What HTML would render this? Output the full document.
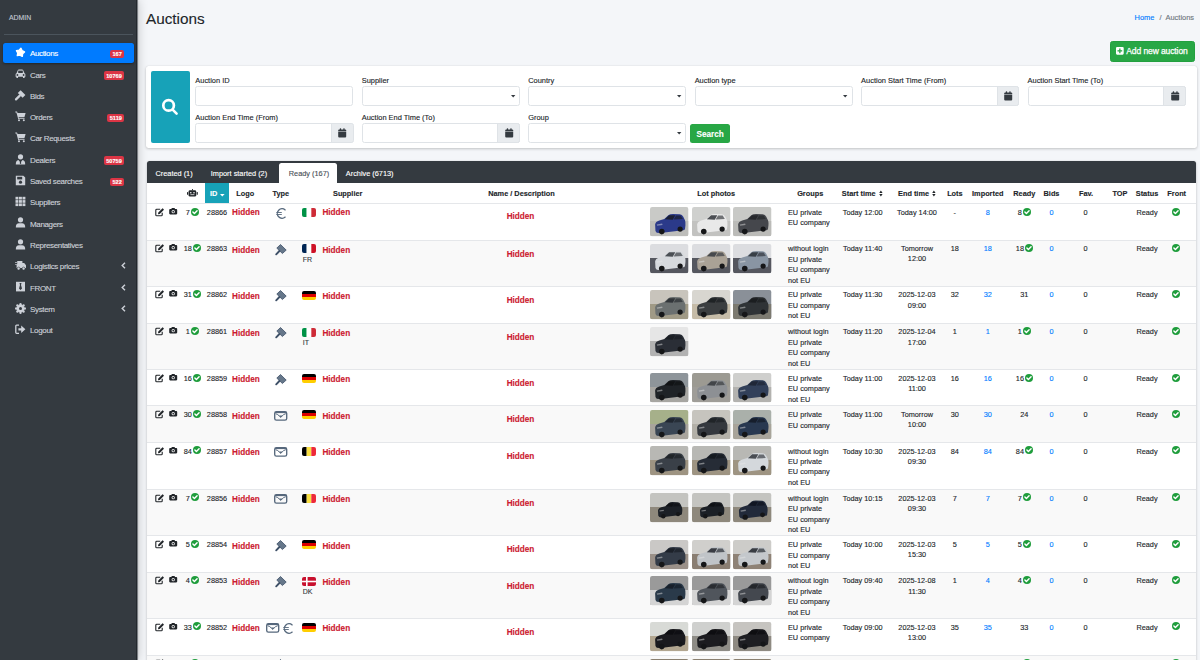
<!DOCTYPE html>
<html><head><meta charset="utf-8"><title>Auctions</title>
<style>
html,body{margin:0;padding:0;}
body{width:1200px;height:660px;overflow:hidden;position:relative;background:#f4f6f9;font-family:"Liberation Sans",sans-serif;}
.t{position:absolute;white-space:nowrap;font-family:"Liberation Sans",sans-serif;-webkit-text-stroke:0.12px currentColor;}
svg{overflow:visible}
</style></head><body>

<div style="position:absolute;left:0.00px;top:0.00px;width:137.00px;height:660.00px;background:#343a40;border-right:1px solid #23282d;box-sizing:border-box;box-shadow:1px 0 10px rgba(0,0,0,.2),1px 0 2px rgba(0,0,0,.18);z-index:5"></div>
<div style="position:absolute;left:137.00px;top:0.00px;width:1.00px;height:660.00px;background:#7a7e83;z-index:6"></div>
<div style="position:absolute;left:0;top:0;width:137px;height:660px;z-index:6">
<div class="t" style="left:9.00px;top:14.00px;font-size:6.9px;line-height:7px;color:#c2c7d0;">ADMIN</div>
<div style="position:absolute;left:3.50px;top:33.50px;width:129.50px;height:1.00px;background:#4b545c"></div>
<div style="position:absolute;left:3.00px;top:43.00px;width:130.50px;height:19.80px;background:#007bff;border-radius:2.5px;box-shadow:0 1px 3px rgba(0,0,0,.12),0 1px 2px rgba(0,0,0,.24)"></div>
<svg style="position:absolute;left:14.50px;top:46.90px" width="11" height="11" viewBox="0 0 11 11"><path d="M5.94 1.35 L7.13 3.75 L9.54 4.90 L7.62 6.76 L7.28 9.42 L4.91 8.17 L2.28 8.66 L2.73 6.02 L1.45 3.68 L4.10 3.29 Z" fill="#ffffff" stroke="#ffffff" stroke-width="1.4" stroke-linejoin="round"/></svg>
<div class="t" style="left:30.00px;top:49.00px;font-size:8.0px;line-height:9px;color:#ffffff;letter-spacing:-0.35px">Auctions</div>
<div style="position:absolute;left:110.00px;top:49.70px;width:14.20px;height:8.60px;background:#dc3545;border-radius:2px"></div>
<div class="t" style="left:-32.90px;width:300px;text-align:center;top:51.00px;font-size:5.6px;line-height:6px;color:#fff;font-weight:700;">167</div>
<svg style="position:absolute;left:14.50px;top:69.12px" width="11" height="11" viewBox="0 0 11 11"><path d="M1.5 4.2 L2.8 1.2 Q3.1 0.5 3.9 0.5 L7.1 0.5 Q7.9 0.5 8.2 1.2 L9.5 4.2 Q10.4 4.6 10.4 5.6 L10.4 7.8 L9.6 7.8 L9.6 9 L8 9 L8 7.8 L3 7.8 L3 9 L1.4 9 L1.4 7.8 L0.6 7.8 L0.6 5.6 Q0.6 4.6 1.5 4.2 Z" fill="#cdd1d8"/><rect x="3.2" y="1.6" width="4.6" height="2.4" fill="#343a40"/><circle cx="2.4" cy="6" r="0.9" fill="#343a40"/><circle cx="8.6" cy="6" r="0.9" fill="#343a40"/></svg>
<div class="t" style="left:30.00px;top:71.00px;font-size:8.0px;line-height:9px;color:#cdd1d8;letter-spacing:-0.35px">Cars</div>
<div style="position:absolute;left:103.80px;top:71.02px;width:20.40px;height:8.60px;background:#dc3545;border-radius:2px"></div>
<div class="t" style="left:-36.00px;width:300px;text-align:center;top:73.00px;font-size:5.6px;line-height:6px;color:#fff;font-weight:700;">10769</div>
<svg style="position:absolute;left:14.50px;top:89.54px" width="11" height="11" viewBox="0 0 11 11"><path d="M5.6 0.2 L10.4 5 L7.6 7.8 L2.8 3 Z" fill="#cdd1d8"/><path d="M4.8 5.6 L1 9.4" stroke="#cdd1d8" stroke-width="2.2" stroke-linecap="round"/></svg>
<div class="t" style="left:30.00px;top:92.00px;font-size:8.0px;line-height:9px;color:#cdd1d8;letter-spacing:-0.35px">Bids</div>
<svg style="position:absolute;left:14.50px;top:110.86px" width="11" height="11" viewBox="0 0 11 11"><path d="M0.3 0.6 L2 0.6 L2.6 2 L10.6 2 L9.4 6.2 L3.6 6.2 L3.9 7.2 L9.6 7.2 L9.6 8 L3.2 8 L1.4 1.5 L0.3 1.5 Z" fill="#cdd1d8"/><circle cx="4" cy="9.3" r="1" fill="#cdd1d8"/><circle cx="8.8" cy="9.3" r="1" fill="#cdd1d8"/></svg>
<div class="t" style="left:30.00px;top:113.00px;font-size:8.0px;line-height:9px;color:#cdd1d8;letter-spacing:-0.35px">Orders</div>
<div style="position:absolute;left:107.40px;top:113.66px;width:16.80px;height:8.60px;background:#dc3545;border-radius:2px"></div>
<div class="t" style="left:-34.20px;width:300px;text-align:center;top:115.00px;font-size:5.6px;line-height:6px;color:#fff;font-weight:700;">5119</div>
<svg style="position:absolute;left:14.50px;top:132.18px" width="11" height="11" viewBox="0 0 11 11"><path d="M0.3 0.6 L2 0.6 L2.6 2 L10.6 2 L9.4 6.2 L3.6 6.2 L3.9 7.2 L9.6 7.2 L9.6 8 L3.2 8 L1.4 1.5 L0.3 1.5 Z" fill="#cdd1d8"/><circle cx="4" cy="9.3" r="1" fill="#cdd1d8"/><circle cx="8.8" cy="9.3" r="1" fill="#cdd1d8"/></svg>
<div class="t" style="left:30.00px;top:134.00px;font-size:8.0px;line-height:9px;color:#cdd1d8;letter-spacing:-0.35px">Car Requests</div>
<svg style="position:absolute;left:14.50px;top:153.50px" width="11" height="11" viewBox="0 0 11 11"><circle cx="5.5" cy="2.8" r="2.6" fill="#cdd1d8"/><path d="M0.8 10.4 Q0.8 6.4 3.4 6 L5.5 8.6 L7.6 6 Q10.2 6.4 10.2 10.4 Z" fill="#cdd1d8"/><path d="M5.1 6.6 L5.9 6.6 L6.2 9.4 L5.5 10 L4.8 9.4 Z" fill="#343a40"/></svg>
<div class="t" style="left:30.00px;top:156.00px;font-size:8.0px;line-height:9px;color:#cdd1d8;letter-spacing:-0.35px">Dealers</div>
<div style="position:absolute;left:103.80px;top:156.30px;width:20.40px;height:8.60px;background:#dc3545;border-radius:2px"></div>
<div class="t" style="left:-36.00px;width:300px;text-align:center;top:158.00px;font-size:5.6px;line-height:6px;color:#fff;font-weight:700;">50759</div>
<svg style="position:absolute;left:14.50px;top:174.82px" width="11" height="11" viewBox="0 0 11 11"><path d="M0.8 0.8 L8.4 0.8 L10.2 2.6 L10.2 10.2 L0.8 10.2 Z" fill="#cdd1d8"/><rect x="2.2" y="1.8" width="5" height="2.6" fill="#343a40"/><circle cx="5.5" cy="7.2" r="1.6" fill="#343a40"/></svg>
<div class="t" style="left:30.00px;top:177.00px;font-size:8.0px;line-height:9px;color:#cdd1d8;letter-spacing:-0.35px">Saved searches</div>
<div style="position:absolute;left:110.00px;top:177.62px;width:14.20px;height:8.60px;background:#dc3545;border-radius:2px"></div>
<div class="t" style="left:-32.90px;width:300px;text-align:center;top:179.00px;font-size:5.6px;line-height:6px;color:#fff;font-weight:700;">522</div>
<svg style="position:absolute;left:14.50px;top:196.14px" width="11" height="11" viewBox="0 0 11 11"><rect x="0.5" y="0.8" width="2.9" height="2.7" fill="#cdd1d8"/><rect x="0.5" y="4.1" width="2.9" height="2.7" fill="#cdd1d8"/><rect x="0.5" y="7.3999999999999995" width="2.9" height="2.7" fill="#cdd1d8"/><rect x="4.0" y="0.8" width="2.9" height="2.7" fill="#cdd1d8"/><rect x="4.0" y="4.1" width="2.9" height="2.7" fill="#cdd1d8"/><rect x="4.0" y="7.3999999999999995" width="2.9" height="2.7" fill="#cdd1d8"/><rect x="7.5" y="0.8" width="2.9" height="2.7" fill="#cdd1d8"/><rect x="7.5" y="4.1" width="2.9" height="2.7" fill="#cdd1d8"/><rect x="7.5" y="7.3999999999999995" width="2.9" height="2.7" fill="#cdd1d8"/></svg>
<div class="t" style="left:30.00px;top:198.00px;font-size:8.0px;line-height:9px;color:#cdd1d8;letter-spacing:-0.35px">Suppliers</div>
<svg style="position:absolute;left:14.50px;top:217.46px" width="11" height="11" viewBox="0 0 11 11"><circle cx="5.5" cy="2.8" r="2.6" fill="#cdd1d8"/><path d="M0.8 10.4 Q0.8 6.2 4 6.2 L7 6.2 Q10.2 6.2 10.2 10.4 Z" fill="#cdd1d8"/></svg>
<div class="t" style="left:30.00px;top:220.00px;font-size:8.0px;line-height:9px;color:#cdd1d8;letter-spacing:-0.35px">Managers</div>
<svg style="position:absolute;left:14.50px;top:238.78px" width="11" height="11" viewBox="0 0 11 11"><circle cx="5.5" cy="2.8" r="2.6" fill="#cdd1d8"/><path d="M0.8 10.4 Q0.8 6.2 4 6.2 L7 6.2 Q10.2 6.2 10.2 10.4 Z" fill="#cdd1d8"/></svg>
<div class="t" style="left:30.00px;top:241.00px;font-size:8.0px;line-height:9px;color:#cdd1d8;letter-spacing:-0.35px">Representatives</div>
<svg style="position:absolute;left:14.50px;top:260.10px" width="11" height="11" viewBox="0 0 11 11"><path d="M2.2 1 L7.4 1 L7.4 3 L9.2 3 L11 5.2 L11 8 L1.6 8 L1.6 5 L0.2 5 L0.2 4.2 L2.2 4.2 Z" fill="#cdd1d8"/><circle cx="3.6" cy="8.6" r="1.5" fill="#cdd1d8" stroke="#343a40" stroke-width="0.6"/><circle cx="8.6" cy="8.6" r="1.5" fill="#cdd1d8" stroke="#343a40" stroke-width="0.6"/><rect x="0" y="2" width="2" height="0.7" fill="#cdd1d8"/></svg>
<div class="t" style="left:30.00px;top:262.00px;font-size:8.0px;line-height:9px;color:#cdd1d8;letter-spacing:-0.35px">Logistics prices</div>
<svg style="position:absolute;left:120.50px;top:262.40px" width="5" height="7" viewBox="0 0 5 7"><path d="M4 0.8 L1.2 3.5 L4 6.2" fill="none" stroke="#cdd1d8" stroke-width="1.4"/></svg>
<svg style="position:absolute;left:14.50px;top:281.42px" width="11" height="11" viewBox="0 0 11 11"><rect x="1" y="0.8" width="9" height="9.6" fill="#cdd1d8"/><path d="M4.5 2 L6.5 2 L6 4 L7 7.5 L5.5 9 L4 7.5 L5 4 Z" fill="#343a40"/></svg>
<div class="t" style="left:30.00px;top:284.00px;font-size:8.0px;line-height:9px;color:#cdd1d8;letter-spacing:-0.35px">FRONT</div>
<svg style="position:absolute;left:120.50px;top:283.72px" width="5" height="7" viewBox="0 0 5 7"><path d="M4 0.8 L1.2 3.5 L4 6.2" fill="none" stroke="#cdd1d8" stroke-width="1.4"/></svg>
<svg style="position:absolute;left:14.50px;top:302.74px" width="11" height="11" viewBox="0 0 11 11"><circle cx="5.5" cy="5.5" r="3.8" fill="#cdd1d8"/><circle cx="9.80" cy="5.50" r="1.2" fill="#cdd1d8"/><circle cx="8.54" cy="8.54" r="1.2" fill="#cdd1d8"/><circle cx="5.50" cy="9.80" r="1.2" fill="#cdd1d8"/><circle cx="2.46" cy="8.54" r="1.2" fill="#cdd1d8"/><circle cx="1.20" cy="5.50" r="1.2" fill="#cdd1d8"/><circle cx="2.46" cy="2.46" r="1.2" fill="#cdd1d8"/><circle cx="5.50" cy="1.20" r="1.2" fill="#cdd1d8"/><circle cx="8.54" cy="2.46" r="1.2" fill="#cdd1d8"/><circle cx="5.5" cy="5.5" r="1.5" fill="#343a40"/></svg>
<div class="t" style="left:30.00px;top:305.00px;font-size:8.0px;line-height:9px;color:#cdd1d8;letter-spacing:-0.35px">System</div>
<svg style="position:absolute;left:120.50px;top:305.04px" width="5" height="7" viewBox="0 0 5 7"><path d="M4 0.8 L1.2 3.5 L4 6.2" fill="none" stroke="#cdd1d8" stroke-width="1.4"/></svg>
<svg style="position:absolute;left:14.50px;top:324.06px" width="11" height="11" viewBox="0 0 11 11"><path d="M4 1.2 L1.6 1.2 Q0.8 1.2 0.8 2 L0.8 8.6 Q0.8 9.4 1.6 9.4 L4 9.4" fill="none" stroke="#cdd1d8" stroke-width="1.3"/><path d="M3.4 4.2 L6.2 4.2 L6.2 1.6 L10.4 5.3 L6.2 9 L6.2 6.4 L3.4 6.4 Z" fill="#cdd1d8"/></svg>
<div class="t" style="left:30.00px;top:326.00px;font-size:8.0px;line-height:9px;color:#cdd1d8;letter-spacing:-0.35px">Logout</div>
</div>
<div class="t" style="left:146.00px;top:10.00px;font-size:15.3px;line-height:17px;color:#212529;">Auctions</div>
<div class="t" style="left:1134.60px;top:13.00px;font-size:7.45px;line-height:9px;color:#6c757d;"><span style="color:#007bff">Home</span><span style="color:#6c757d;padding:0 4px 0 5px">/</span><span style="color:#6c757d">Auctions</span></div>
<div style="position:absolute;left:1109.60px;top:40.50px;width:85.90px;height:21.10px;background:#28a745;border:1px solid #23a03f;box-sizing:border-box;border-radius:2.5px"></div>
<svg style="position:absolute;left:1116.30px;top:46.60px" width="8" height="8" viewBox="0 0 8 8"><rect x="0" y="0" width="7.7" height="7.7" rx="1.1" fill="#fff"/><rect x="3.2" y="1.5" width="1.3" height="4.7" fill="#28a745"/><rect x="1.5" y="3.2" width="4.7" height="1.3" fill="#28a745"/></svg>
<div class="t" style="left:1126.30px;top:46.00px;font-size:8.5px;line-height:10px;color:#fff;letter-spacing:-0.1px;-webkit-text-stroke:0.25px #fff">Add new auction</div>
<div style="position:absolute;left:146.00px;top:65.50px;width:1050.50px;height:82.50px;background:#fff;border-radius:2.5px;box-shadow:0 0 1px rgba(0,0,0,.125),0 1px 3px rgba(0,0,0,.2)"></div>
<div style="position:absolute;left:151.00px;top:70.50px;width:39.00px;height:72.50px;background:#17a2b8;border-radius:2px"></div>
<svg style="position:absolute;left:161.00px;top:98.00px" width="18" height="18" viewBox="0 0 18 18"><circle cx="7.6" cy="7.4" r="5.3" fill="none" stroke="#fff" stroke-width="2.7"/><path d="M11.6 11.6 L15.6 15.6" stroke="#fff" stroke-width="2.6" stroke-linecap="round"/></svg>
<div class="t" style="left:195.30px;top:76.00px;font-size:7.45px;line-height:9px;color:#212529;">Auction ID</div>
<div style="position:absolute;left:195.30px;top:86.40px;width:158.20px;height:19.40px;background:#fff;border:1px solid #dfe3e7;border-radius:2.5px;box-sizing:border-box"></div>
<div class="t" style="left:361.75px;top:76.00px;font-size:7.45px;line-height:9px;color:#212529;">Supplier</div>
<div style="position:absolute;left:361.75px;top:86.40px;width:158.20px;height:19.40px;background:#fff;border:1px solid #dfe3e7;border-radius:2.5px;box-sizing:border-box"></div>
<svg style="position:absolute;left:510.55px;top:94.80px" width="5" height="3" viewBox="0 0 5 3"><path d="M0 0 L4.4 0 L2.2 2.6 Z" fill="#343a40"/></svg>
<div class="t" style="left:528.20px;top:76.00px;font-size:7.45px;line-height:9px;color:#212529;">Country</div>
<div style="position:absolute;left:528.20px;top:86.40px;width:158.20px;height:19.40px;background:#fff;border:1px solid #dfe3e7;border-radius:2.5px;box-sizing:border-box"></div>
<svg style="position:absolute;left:677.00px;top:94.80px" width="5" height="3" viewBox="0 0 5 3"><path d="M0 0 L4.4 0 L2.2 2.6 Z" fill="#343a40"/></svg>
<div class="t" style="left:694.65px;top:76.00px;font-size:7.45px;line-height:9px;color:#212529;">Auction type</div>
<div style="position:absolute;left:694.65px;top:86.40px;width:158.20px;height:19.40px;background:#fff;border:1px solid #dfe3e7;border-radius:2.5px;box-sizing:border-box"></div>
<svg style="position:absolute;left:843.45px;top:94.80px" width="5" height="3" viewBox="0 0 5 3"><path d="M0 0 L4.4 0 L2.2 2.6 Z" fill="#343a40"/></svg>
<div class="t" style="left:861.10px;top:76.00px;font-size:7.45px;line-height:9px;color:#212529;">Auction Start Time (From)</div>
<div style="position:absolute;left:861.10px;top:86.40px;width:158.20px;height:19.40px;background:#fff;border:1px solid #dfe3e7;border-radius:2.5px;box-sizing:border-box"></div>
<div style="position:absolute;left:996.80px;top:86.40px;width:22.50px;height:19.40px;background:#e9ecef;border:1px solid #dfe3e7;border-radius:0 2.5px 2.5px 0;box-sizing:border-box"></div>
<svg style="position:absolute;left:1004.10px;top:91.00px" width="9" height="10" viewBox="0 0 9 10"><path d="M0.2 2.6 Q0.2 1.6 1.2 1.6 L7.2 1.6 Q8.2 1.6 8.2 2.6 L8.2 3.4 L0.2 3.4 Z" fill="#343a40"/><rect x="1.8" y="0.2" width="1.3" height="2.4" rx="0.5" fill="#343a40"/><rect x="5.3" y="0.2" width="1.3" height="2.4" rx="0.5" fill="#343a40"/><path d="M0.2 4.1 L8.2 4.1 L8.2 8.4 Q8.2 9.4 7.2 9.4 L1.2 9.4 Q0.2 9.4 0.2 8.4 Z" fill="#343a40"/></svg>
<div class="t" style="left:1027.55px;top:76.00px;font-size:7.45px;line-height:9px;color:#212529;">Auction Start Time (To)</div>
<div style="position:absolute;left:1027.55px;top:86.40px;width:158.20px;height:19.40px;background:#fff;border:1px solid #dfe3e7;border-radius:2.5px;box-sizing:border-box"></div>
<div style="position:absolute;left:1163.25px;top:86.40px;width:22.50px;height:19.40px;background:#e9ecef;border:1px solid #dfe3e7;border-radius:0 2.5px 2.5px 0;box-sizing:border-box"></div>
<svg style="position:absolute;left:1170.55px;top:91.00px" width="9" height="10" viewBox="0 0 9 10"><path d="M0.2 2.6 Q0.2 1.6 1.2 1.6 L7.2 1.6 Q8.2 1.6 8.2 2.6 L8.2 3.4 L0.2 3.4 Z" fill="#343a40"/><rect x="1.8" y="0.2" width="1.3" height="2.4" rx="0.5" fill="#343a40"/><rect x="5.3" y="0.2" width="1.3" height="2.4" rx="0.5" fill="#343a40"/><path d="M0.2 4.1 L8.2 4.1 L8.2 8.4 Q8.2 9.4 7.2 9.4 L1.2 9.4 Q0.2 9.4 0.2 8.4 Z" fill="#343a40"/></svg>
<div class="t" style="left:195.30px;top:113.00px;font-size:7.45px;line-height:9px;color:#212529;">Auction End Time (From)</div>
<div style="position:absolute;left:195.30px;top:123.20px;width:158.20px;height:19.40px;background:#fff;border:1px solid #dfe3e7;border-radius:2.5px;box-sizing:border-box"></div>
<div style="position:absolute;left:331.00px;top:123.20px;width:22.50px;height:19.40px;background:#e9ecef;border:1px solid #dfe3e7;border-radius:0 2.5px 2.5px 0;box-sizing:border-box"></div>
<svg style="position:absolute;left:338.30px;top:127.80px" width="9" height="10" viewBox="0 0 9 10"><path d="M0.2 2.6 Q0.2 1.6 1.2 1.6 L7.2 1.6 Q8.2 1.6 8.2 2.6 L8.2 3.4 L0.2 3.4 Z" fill="#343a40"/><rect x="1.8" y="0.2" width="1.3" height="2.4" rx="0.5" fill="#343a40"/><rect x="5.3" y="0.2" width="1.3" height="2.4" rx="0.5" fill="#343a40"/><path d="M0.2 4.1 L8.2 4.1 L8.2 8.4 Q8.2 9.4 7.2 9.4 L1.2 9.4 Q0.2 9.4 0.2 8.4 Z" fill="#343a40"/></svg>
<div class="t" style="left:361.75px;top:113.00px;font-size:7.45px;line-height:9px;color:#212529;">Auction End Time (To)</div>
<div style="position:absolute;left:361.75px;top:123.20px;width:158.20px;height:19.40px;background:#fff;border:1px solid #dfe3e7;border-radius:2.5px;box-sizing:border-box"></div>
<div style="position:absolute;left:497.45px;top:123.20px;width:22.50px;height:19.40px;background:#e9ecef;border:1px solid #dfe3e7;border-radius:0 2.5px 2.5px 0;box-sizing:border-box"></div>
<svg style="position:absolute;left:504.75px;top:127.80px" width="9" height="10" viewBox="0 0 9 10"><path d="M0.2 2.6 Q0.2 1.6 1.2 1.6 L7.2 1.6 Q8.2 1.6 8.2 2.6 L8.2 3.4 L0.2 3.4 Z" fill="#343a40"/><rect x="1.8" y="0.2" width="1.3" height="2.4" rx="0.5" fill="#343a40"/><rect x="5.3" y="0.2" width="1.3" height="2.4" rx="0.5" fill="#343a40"/><path d="M0.2 4.1 L8.2 4.1 L8.2 8.4 Q8.2 9.4 7.2 9.4 L1.2 9.4 Q0.2 9.4 0.2 8.4 Z" fill="#343a40"/></svg>
<div class="t" style="left:528.20px;top:113.00px;font-size:7.45px;line-height:9px;color:#212529;">Group</div>
<div style="position:absolute;left:528.20px;top:123.20px;width:158.20px;height:19.40px;background:#fff;border:1px solid #dfe3e7;border-radius:2.5px;box-sizing:border-box"></div>
<svg style="position:absolute;left:677.00px;top:131.60px" width="5" height="3" viewBox="0 0 5 3"><path d="M0 0 L4.4 0 L2.2 2.6 Z" fill="#343a40"/></svg>
<div style="position:absolute;left:690.30px;top:123.50px;width:40.00px;height:19.00px;background:#28a745;border-radius:2.5px"></div>
<div class="t" style="left:560.20px;width:300px;text-align:center;top:130.00px;font-size:8.2px;line-height:9px;color:#fff;font-weight:700;">Search</div>
<div style="position:absolute;left:146.50px;top:161.00px;width:1049.00px;height:520.00px;background:#fff;border-radius:2.5px;box-shadow:0 0 1px rgba(0,0,0,.125),0 1px 3px rgba(0,0,0,.2);overflow:hidden"></div>
<div style="position:absolute;left:146.50px;top:161.00px;width:1049.00px;height:21.50px;background:#343a40;border-radius:2.5px 2.5px 0 0"></div>
<div style="position:absolute;left:279.30px;top:163.30px;width:57.70px;height:19.50px;background:#fff;border-radius:2.5px 2.5px 0 0"></div>
<div class="t" style="left:155.50px;top:169.00px;font-size:7.35px;line-height:9px;color:#fff;">Created (1)</div>
<div class="t" style="left:210.80px;top:169.00px;font-size:7.35px;line-height:9px;color:#fff;">Import started (2)</div>
<div class="t" style="left:288.80px;top:169.00px;font-size:7.35px;line-height:9px;color:#495057;">Ready (167)</div>
<div class="t" style="left:345.80px;top:169.00px;font-size:7.35px;line-height:9px;color:#fff;">Archive (6713)</div>
<div style="position:absolute;left:146.50px;top:203.00px;width:1049.00px;height:0.80px;background:#dee2e6"></div>
<div style="position:absolute;left:205.00px;top:183.00px;width:24.20px;height:20.20px;background:#17a2b8"></div>
<svg style="position:absolute;left:186.70px;top:189.20px" width="11" height="8" viewBox="0 0 11 8"><rect x="1.6" y="1.2" width="7.6" height="6.4" rx="1.4" fill="#212529"/><rect x="0" y="3" width="1.2" height="2.8" rx="0.5" fill="#212529"/><rect x="9.6" y="3" width="1.2" height="2.8" rx="0.5" fill="#212529"/><rect x="5" y="0" width="0.9" height="1.4" fill="#212529"/><rect x="3.2" y="3" width="1.2" height="1.4" fill="#fff"/><rect x="6.4" y="3" width="1.2" height="1.4" fill="#fff"/><rect x="3.4" y="5.4" width="4" height="0.7" fill="#fff"/></svg>
<div class="t" style="left:210.00px;top:189.00px;font-size:7.35px;line-height:9px;color:#fff;font-weight:700;">ID</div>
<svg style="position:absolute;left:219.60px;top:193.60px" width="5" height="3" viewBox="0 0 5 3"><path d="M0 0 L4.6 0 L2.3 2.6 Z" fill="#fff"/></svg>
<div class="t" style="left:95.20px;width:300px;text-align:center;top:189.00px;font-size:7.35px;line-height:9px;color:#212529;font-weight:700;">Logo</div>
<div class="t" style="left:130.90px;width:300px;text-align:center;top:189.00px;font-size:7.35px;line-height:9px;color:#212529;font-weight:700;">Type</div>
<div class="t" style="left:197.70px;width:300px;text-align:center;top:189.00px;font-size:7.35px;line-height:9px;color:#212529;font-weight:700;">Supplier</div>
<div class="t" style="left:371.50px;width:300px;text-align:center;top:189.00px;font-size:7.35px;line-height:9px;color:#212529;font-weight:700;">Name / Description</div>
<div class="t" style="left:566.20px;width:300px;text-align:center;top:189.00px;font-size:7.35px;line-height:9px;color:#212529;font-weight:700;">Lot photos</div>
<div class="t" style="left:660.20px;width:300px;text-align:center;top:189.00px;font-size:7.35px;line-height:9px;color:#212529;font-weight:700;">Groups</div>
<div class="t" style="left:837.80px;width:300px;text-align:center;top:189.00px;font-size:7.35px;line-height:9px;color:#212529;font-weight:700;">Imported</div>
<div class="t" style="left:804.90px;width:300px;text-align:center;top:189.00px;font-size:7.35px;line-height:9px;color:#212529;font-weight:700;">Lots</div>
<div class="t" style="left:874.30px;width:300px;text-align:center;top:189.00px;font-size:7.35px;line-height:9px;color:#212529;font-weight:700;">Ready</div>
<div class="t" style="left:901.50px;width:300px;text-align:center;top:189.00px;font-size:7.35px;line-height:9px;color:#212529;font-weight:700;">Bids</div>
<div class="t" style="left:936.00px;width:300px;text-align:center;top:189.00px;font-size:7.35px;line-height:9px;color:#212529;font-weight:700;">Fav.</div>
<div class="t" style="left:970.00px;width:300px;text-align:center;top:189.00px;font-size:7.35px;line-height:9px;color:#212529;font-weight:700;">TOP</div>
<div class="t" style="left:997.00px;width:300px;text-align:center;top:189.00px;font-size:7.35px;line-height:9px;color:#212529;font-weight:700;">Status</div>
<div class="t" style="left:1026.70px;width:300px;text-align:center;top:189.00px;font-size:7.35px;line-height:9px;color:#212529;font-weight:700;">Front</div>
<div class="t" style="left:841.80px;top:189.00px;font-size:7.35px;line-height:9px;color:#212529;font-weight:700;">Start time</div>
<svg style="position:absolute;left:879.00px;top:189.50px" width="4" height="7" viewBox="0 0 4 7"><path d="M0.2 2.9 L3.6 2.9 L1.9 0.4 Z M0.2 3.9 L3.6 3.9 L1.9 6.4 Z" fill="#212529"/></svg>
<div class="t" style="left:898.00px;top:189.00px;font-size:7.35px;line-height:9px;color:#212529;font-weight:700;">End time</div>
<svg style="position:absolute;left:931.50px;top:189.50px" width="4" height="7" viewBox="0 0 4 7"><path d="M0.2 2.9 L3.6 2.9 L1.9 0.4 Z M0.2 3.9 L3.6 3.9 L1.9 6.4 Z" fill="#212529"/></svg>
<div style="position:absolute;left:146.50px;top:203.75px;width:1049.00px;height:36.75px;background:#fff"></div>
<div style="position:absolute;left:146.50px;top:203.00px;width:1049.00px;height:1.30px;background:#e5e7ea"></div>
<svg style="position:absolute;left:154.80px;top:207.95px" width="9.5" height="8.5" viewBox="0 0 9.5 8.5"><path d="M5.2 1.3 L1.7 1.3 Q0.8 1.3 0.8 2.2 L0.8 6.9 Q0.8 7.7 1.7 7.7 L6.3 7.7 Q7.2 7.7 7.2 6.9 L7.2 4.8" fill="none" stroke="#212529" stroke-width="1.1"/><path d="M3.3 4.5 L7.3 0.5 Q7.6 0.2 7.9 0.5 L8.7 1.3 Q9 1.6 8.7 1.9 L4.7 5.9 L3 6.2 Z" fill="#212529"/></svg>
<svg style="position:absolute;left:168.60px;top:208.05px" width="8.6" height="7" viewBox="0 0 8.6 7"><path d="M0.2 2 Q0.2 1.1 1.1 1.1 L2.3 1.1 L2.9 0.1 L5.5 0.1 L6.1 1.1 L7.3 1.1 Q8.2 1.1 8.2 2 L8.2 5.6 Q8.2 6.4 7.3 6.4 L1.1 6.4 Q0.2 6.4 0.2 5.6 Z" fill="#212529"/><circle cx="4.2" cy="3.7" r="1.6" fill="#fff"/><circle cx="4.2" cy="3.7" r="0.85" fill="#212529"/></svg>
<div class="t" style="left:185.67px;top:208.00px;font-size:7.3px;line-height:9px;color:#212529;">7</div>
<svg style="position:absolute;left:190.53px;top:207.85px" width="8" height="8" viewBox="0 0 8 8"><circle cx="4" cy="4" r="4" fill="#1f9d3c"/><path d="M1.92 4.08 L3.40 5.52 L6.08 2.72" fill="none" stroke="#fff" stroke-width="1.44" stroke-linecap="round" stroke-linejoin="round"/></svg>
<div class="t" style="left:67.00px;width:300px;text-align:center;top:208.00px;font-size:7.3px;line-height:9px;color:#212529;">28866</div>
<div class="t" style="left:95.90px;width:300px;text-align:center;top:208.00px;font-size:8.2px;line-height:9px;color:#cc1a30;font-weight:700;">Hidden</div>
<svg style="position:absolute;left:276.00px;top:208.15px" width="10.5" height="11" viewBox="0 0 10.5 11"><path d="M9.2 1.9 A4.75 4.75 0 1 0 9.2 9.1" fill="none" stroke="#56687c" stroke-width="1.3" stroke-linecap="round"/><path d="M0.3 4.5 L5.8 4.5 M0.3 6.5 L5.8 6.5" stroke="#56687c" stroke-width="0.9"/></svg>
<svg style="position:absolute;left:302.40px;top:208.25px" width="14" height="8.9" viewBox="0 0 14 8.9"><defs><clipPath id="f30242082"><rect x="0" y="0" width="14" height="8.9" rx="2"/></clipPath></defs><g clip-path="url(#f30242082)"><rect x="0" y="0" width="4.67" height="9" fill="#009246"/><rect x="4.67" y="0" width="4.67" height="9" fill="#fff"/><rect x="9.33" y="0" width="4.67" height="9" fill="#ce2b37"/></g></svg>
<div class="t" style="left:322.40px;top:208.00px;font-size:8.2px;line-height:9px;color:#cc1a30;font-weight:700;">Hidden</div>
<div class="t" style="left:370.50px;width:300px;text-align:center;top:212.00px;font-size:8.2px;line-height:9px;color:#cc1a30;font-weight:700;">Hidden</div>
<svg style="position:absolute;left:650.30px;top:207.05px;border-radius:2px" width="38.5" height="29.3" viewBox="0 0 38.5 29.3"><defs><clipPath id="c65032070"><rect x="0" y="0" width="38.5" height="29.3" rx="2.2"/></clipPath></defs><g clip-path="url(#c65032070)"><rect x="0" y="0" width="38.5" height="29.3" fill="#c9cac7"/><rect x="0" y="14" width="38.5" height="15.3" fill="#bdbdba"/><g transform="translate(2.23 1.76) scale(0.9)"><path d="M3.2 17.6 Q3.6 14.2 7.8 13 L13.4 11.4 L18.2 7 Q19.8 5.8 23 5.8 L30.6 6 Q33.4 6.2 34.5 8.8 L36.4 12.8 Q37.2 14.6 36.9 18.4 L36.4 22.4 Q36 23.8 34.2 23.8 L9 27 Q4.4 27.4 3.6 24.6 Z" fill="#2b3a8a"/><path d="M14 11.6 L18.8 7.3 L25.6 7.3 L22.8 12.2 Z" fill="#1a1d2a" opacity="0.9"/><path d="M23.8 12 L26.5 7.4 L31.6 7.6 L34 11.4 Z" fill="#1a1d2a" opacity="0.7"/><path d="M5 17.4 L11 16.4 L11.5 18 L5.5 19 Z" fill="#e8e8e8" opacity="0.45"/><circle cx="10.6" cy="25.4" r="3.1" fill="#151618"/><circle cx="31" cy="22.6" r="2.9" fill="#151618"/></g></g></svg>
<svg style="position:absolute;left:691.50px;top:207.05px;border-radius:2px" width="38.5" height="29.3" viewBox="0 0 38.5 29.3"><defs><clipPath id="c69152070"><rect x="0" y="0" width="38.5" height="29.3" rx="2.2"/></clipPath></defs><g clip-path="url(#c69152070)"><rect x="0" y="0" width="38.5" height="29.3" fill="#cfd0ce"/><rect x="0" y="14" width="38.5" height="15.3" fill="#c2c2c0"/><g transform="translate(2.23 1.76) scale(0.9)"><path d="M3.2 17.6 Q3.6 14.2 7.8 13 L13.4 11.4 L18.2 7 Q19.8 5.8 23 5.8 L30.6 6 Q33.4 6.2 34.5 8.8 L36.4 12.8 Q37.2 14.6 36.9 18.4 L36.4 22.4 Q36 23.8 34.2 23.8 L9 27 Q4.4 27.4 3.6 24.6 Z" fill="#e9e9e9"/><path d="M14 11.6 L18.8 7.3 L25.6 7.3 L22.8 12.2 Z" fill="#3a3d42" opacity="0.9"/><path d="M23.8 12 L26.5 7.4 L31.6 7.6 L34 11.4 Z" fill="#3a3d42" opacity="0.7"/><path d="M5 17.4 L11 16.4 L11.5 18 L5.5 19 Z" fill="#e8e8e8" opacity="0.45"/><circle cx="10.6" cy="25.4" r="3.1" fill="#151618"/><circle cx="31" cy="22.6" r="2.9" fill="#151618"/></g></g></svg>
<svg style="position:absolute;left:732.70px;top:207.05px;border-radius:2px" width="38.5" height="29.3" viewBox="0 0 38.5 29.3"><defs><clipPath id="c73262070"><rect x="0" y="0" width="38.5" height="29.3" rx="2.2"/></clipPath></defs><g clip-path="url(#c73262070)"><rect x="0" y="0" width="38.5" height="29.3" fill="#c8c9c6"/><rect x="0" y="14" width="38.5" height="15.3" fill="#bbbbb8"/><g transform="translate(2.23 1.76) scale(0.9)"><path d="M3.2 17.6 Q3.6 14.2 7.8 13 L13.4 11.4 L18.2 7 Q19.8 5.8 23 5.8 L30.6 6 Q33.4 6.2 34.5 8.8 L36.4 12.8 Q37.2 14.6 36.9 18.4 L36.4 22.4 Q36 23.8 34.2 23.8 L9 27 Q4.4 27.4 3.6 24.6 Z" fill="#45474c"/><path d="M14 11.6 L18.8 7.3 L25.6 7.3 L22.8 12.2 Z" fill="#23262a" opacity="0.9"/><path d="M23.8 12 L26.5 7.4 L31.6 7.6 L34 11.4 Z" fill="#23262a" opacity="0.7"/><path d="M5 17.4 L11 16.4 L11.5 18 L5.5 19 Z" fill="#e8e8e8" opacity="0.45"/><circle cx="10.6" cy="25.4" r="3.1" fill="#151618"/><circle cx="31" cy="22.6" r="2.9" fill="#151618"/></g></g></svg>
<div class="t" style="left:788.00px;top:208.00px;font-size:7.3px;line-height:9px;color:#212529;">EU private</div>
<div class="t" style="left:788.00px;top:218.00px;font-size:7.3px;line-height:9px;color:#212529;">EU company</div>
<div class="t" style="left:712.70px;width:300px;text-align:center;top:208.00px;font-size:7.3px;line-height:9px;color:#212529;">Today 12:00</div>
<div class="t" style="left:767.00px;width:300px;text-align:center;top:208.00px;font-size:7.3px;line-height:9px;color:#212529;">Today 14:00</div>
<div class="t" style="left:804.80px;width:300px;text-align:center;top:208.00px;font-size:7.3px;line-height:9px;color:#212529;">-</div>
<div class="t" style="left:837.80px;width:300px;text-align:center;top:208.00px;font-size:7.3px;line-height:9px;color:#007bff;">8</div>
<div class="t" style="left:1017.87px;top:208.00px;font-size:7.3px;line-height:9px;color:#212529;">8</div>
<svg style="position:absolute;left:1022.73px;top:207.85px" width="8" height="8" viewBox="0 0 8 8"><circle cx="4" cy="4" r="4" fill="#1f9d3c"/><path d="M1.92 4.08 L3.40 5.52 L6.08 2.72" fill="none" stroke="#fff" stroke-width="1.44" stroke-linecap="round" stroke-linejoin="round"/></svg>
<div class="t" style="left:901.60px;width:300px;text-align:center;top:208.00px;font-size:7.3px;line-height:9px;color:#007bff;">0</div>
<div class="t" style="left:935.60px;width:300px;text-align:center;top:208.00px;font-size:7.3px;line-height:9px;color:#212529;">0</div>
<div class="t" style="left:997.00px;width:300px;text-align:center;top:208.00px;font-size:7.3px;line-height:9px;color:#212529;">Ready</div>
<svg style="position:absolute;left:1171.60px;top:207.85px" width="8" height="8" viewBox="0 0 8 8"><circle cx="4" cy="4" r="4" fill="#1f9d3c"/><path d="M1.92 4.08 L3.40 5.52 L6.08 2.72" fill="none" stroke="#fff" stroke-width="1.44" stroke-linecap="round" stroke-linejoin="round"/></svg>
<div style="position:absolute;left:146.50px;top:240.50px;width:1049.00px;height:46.25px;background:#f9f9f9"></div>
<div style="position:absolute;left:146.50px;top:239.50px;width:1049.00px;height:1.00px;background:#e5e7ea"></div>
<svg style="position:absolute;left:154.80px;top:244.10px" width="9.5" height="8.5" viewBox="0 0 9.5 8.5"><path d="M5.2 1.3 L1.7 1.3 Q0.8 1.3 0.8 2.2 L0.8 6.9 Q0.8 7.7 1.7 7.7 L6.3 7.7 Q7.2 7.7 7.2 6.9 L7.2 4.8" fill="none" stroke="#212529" stroke-width="1.1"/><path d="M3.3 4.5 L7.3 0.5 Q7.6 0.2 7.9 0.5 L8.7 1.3 Q9 1.6 8.7 1.9 L4.7 5.9 L3 6.2 Z" fill="#212529"/></svg>
<svg style="position:absolute;left:168.60px;top:244.20px" width="8.6" height="7" viewBox="0 0 8.6 7"><path d="M0.2 2 Q0.2 1.1 1.1 1.1 L2.3 1.1 L2.9 0.1 L5.5 0.1 L6.1 1.1 L7.3 1.1 Q8.2 1.1 8.2 2 L8.2 5.6 Q8.2 6.4 7.3 6.4 L1.1 6.4 Q0.2 6.4 0.2 5.6 Z" fill="#212529"/><circle cx="4.2" cy="3.7" r="1.6" fill="#fff"/><circle cx="4.2" cy="3.7" r="0.85" fill="#212529"/></svg>
<div class="t" style="left:183.64px;top:244.00px;font-size:7.3px;line-height:9px;color:#212529;">18</div>
<svg style="position:absolute;left:192.56px;top:244.00px" width="8" height="8" viewBox="0 0 8 8"><circle cx="4" cy="4" r="4" fill="#1f9d3c"/><path d="M1.92 4.08 L3.40 5.52 L6.08 2.72" fill="none" stroke="#fff" stroke-width="1.44" stroke-linecap="round" stroke-linejoin="round"/></svg>
<div class="t" style="left:67.00px;width:300px;text-align:center;top:244.00px;font-size:7.3px;line-height:9px;color:#212529;">28863</div>
<div class="t" style="left:95.90px;width:300px;text-align:center;top:246.00px;font-size:8.2px;line-height:9px;color:#cc1a30;font-weight:700;">Hidden</div>
<svg style="position:absolute;left:275.00px;top:244.00px" width="12" height="11.5" viewBox="0 0 12 11.5"><path d="M5.5 0.5 L11.2 6.1 L7.4 9.5 L1.8 4.1 Z" fill="#66778a" stroke="#3f5168" stroke-width="0.8" stroke-linejoin="round"/><path d="M4.4 7 L1.2 10.3" stroke="#3f5168" stroke-width="1.9" stroke-linecap="round"/></svg>
<svg style="position:absolute;left:302.40px;top:244.40px" width="14" height="8.9" viewBox="0 0 14 8.9"><defs><clipPath id="f30242444"><rect x="0" y="0" width="14" height="8.9" rx="2"/></clipPath></defs><g clip-path="url(#f30242444)"><rect x="0" y="0" width="4.67" height="9" fill="#002654"/><rect x="4.67" y="0" width="4.67" height="9" fill="#fff"/><rect x="9.33" y="0" width="4.67" height="9" fill="#ce1126"/></g></svg>
<div class="t" style="left:302.70px;top:256.00px;font-size:7.0px;line-height:7px;color:#343a40;">FR</div>
<div class="t" style="left:322.40px;top:246.00px;font-size:8.2px;line-height:9px;color:#cc1a30;font-weight:700;">Hidden</div>
<div class="t" style="left:370.50px;width:300px;text-align:center;top:250.00px;font-size:8.2px;line-height:9px;color:#cc1a30;font-weight:700;">Hidden</div>
<svg style="position:absolute;left:650.30px;top:243.80px;border-radius:2px" width="38.5" height="29.3" viewBox="0 0 38.5 29.3"><defs><clipPath id="c65032438"><rect x="0" y="0" width="38.5" height="29.3" rx="2.2"/></clipPath></defs><g clip-path="url(#c65032438)"><rect x="0" y="0" width="38.5" height="29.3" fill="#dcdde0"/><rect x="0" y="14" width="38.5" height="15.3" fill="#55575f"/><g transform="translate(2.23 1.76) scale(0.9)"><path d="M3.2 17.6 Q3.6 14.2 7.8 13 L13.4 11.4 L18.2 7 Q19.8 5.8 23 5.8 L30.6 6 Q33.4 6.2 34.5 8.8 L36.4 12.8 Q37.2 14.6 36.9 18.4 L36.4 22.4 Q36 23.8 34.2 23.8 L9 27 Q4.4 27.4 3.6 24.6 Z" fill="#d6d9dd"/><path d="M14 11.6 L18.8 7.3 L25.6 7.3 L22.8 12.2 Z" fill="#3b3f45" opacity="0.9"/><path d="M23.8 12 L26.5 7.4 L31.6 7.6 L34 11.4 Z" fill="#3b3f45" opacity="0.7"/><path d="M5 17.4 L11 16.4 L11.5 18 L5.5 19 Z" fill="#e8e8e8" opacity="0.45"/><circle cx="10.6" cy="25.4" r="3.1" fill="#151618"/><circle cx="31" cy="22.6" r="2.9" fill="#151618"/></g></g></svg>
<svg style="position:absolute;left:691.50px;top:243.80px;border-radius:2px" width="38.5" height="29.3" viewBox="0 0 38.5 29.3"><defs><clipPath id="c69152438"><rect x="0" y="0" width="38.5" height="29.3" rx="2.2"/></clipPath></defs><g clip-path="url(#c69152438)"><rect x="0" y="0" width="38.5" height="29.3" fill="#dcdde0"/><rect x="0" y="14" width="38.5" height="15.3" fill="#55575f"/><g transform="translate(2.23 1.76) scale(0.9)"><path d="M3.2 17.6 Q3.6 14.2 7.8 13 L13.4 11.4 L18.2 7 Q19.8 5.8 23 5.8 L30.6 6 Q33.4 6.2 34.5 8.8 L36.4 12.8 Q37.2 14.6 36.9 18.4 L36.4 22.4 Q36 23.8 34.2 23.8 L9 27 Q4.4 27.4 3.6 24.6 Z" fill="#aaa296"/><path d="M14 11.6 L18.8 7.3 L25.6 7.3 L22.8 12.2 Z" fill="#3b3f45" opacity="0.9"/><path d="M23.8 12 L26.5 7.4 L31.6 7.6 L34 11.4 Z" fill="#3b3f45" opacity="0.7"/><path d="M5 17.4 L11 16.4 L11.5 18 L5.5 19 Z" fill="#e8e8e8" opacity="0.45"/><circle cx="10.6" cy="25.4" r="3.1" fill="#151618"/><circle cx="31" cy="22.6" r="2.9" fill="#151618"/></g></g></svg>
<svg style="position:absolute;left:732.70px;top:243.80px;border-radius:2px" width="38.5" height="29.3" viewBox="0 0 38.5 29.3"><defs><clipPath id="c73262438"><rect x="0" y="0" width="38.5" height="29.3" rx="2.2"/></clipPath></defs><g clip-path="url(#c73262438)"><rect x="0" y="0" width="38.5" height="29.3" fill="#dcdde0"/><rect x="0" y="14" width="38.5" height="15.3" fill="#55575f"/><g transform="translate(2.23 1.76) scale(0.9)"><path d="M3.2 17.6 Q3.6 14.2 7.8 13 L13.4 11.4 L18.2 7 Q19.8 5.8 23 5.8 L30.6 6 Q33.4 6.2 34.5 8.8 L36.4 12.8 Q37.2 14.6 36.9 18.4 L36.4 22.4 Q36 23.8 34.2 23.8 L9 27 Q4.4 27.4 3.6 24.6 Z" fill="#8995a3"/><path d="M14 11.6 L18.8 7.3 L25.6 7.3 L22.8 12.2 Z" fill="#30353c" opacity="0.9"/><path d="M23.8 12 L26.5 7.4 L31.6 7.6 L34 11.4 Z" fill="#30353c" opacity="0.7"/><path d="M5 17.4 L11 16.4 L11.5 18 L5.5 19 Z" fill="#e8e8e8" opacity="0.45"/><circle cx="10.6" cy="25.4" r="3.1" fill="#151618"/><circle cx="31" cy="22.6" r="2.9" fill="#151618"/></g></g></svg>
<div class="t" style="left:788.00px;top:244.00px;font-size:7.3px;line-height:9px;color:#212529;">without login</div>
<div class="t" style="left:788.00px;top:255.00px;font-size:7.3px;line-height:9px;color:#212529;">EU private</div>
<div class="t" style="left:788.00px;top:265.00px;font-size:7.3px;line-height:9px;color:#212529;">EU company</div>
<div class="t" style="left:788.00px;top:276.00px;font-size:7.3px;line-height:9px;color:#212529;">not EU</div>
<div class="t" style="left:712.70px;width:300px;text-align:center;top:244.00px;font-size:7.3px;line-height:9px;color:#212529;">Today 11:40</div>
<div class="t" style="left:767.00px;width:300px;text-align:center;top:244.00px;font-size:7.3px;line-height:9px;color:#212529;">Tomorrow</div>
<div class="t" style="left:767.00px;width:300px;text-align:center;top:254.00px;font-size:7.3px;line-height:9px;color:#212529;">12:00</div>
<div class="t" style="left:804.80px;width:300px;text-align:center;top:244.00px;font-size:7.3px;line-height:9px;color:#212529;">18</div>
<div class="t" style="left:837.80px;width:300px;text-align:center;top:244.00px;font-size:7.3px;line-height:9px;color:#007bff;">18</div>
<div class="t" style="left:1015.84px;top:244.00px;font-size:7.3px;line-height:9px;color:#212529;">18</div>
<svg style="position:absolute;left:1024.76px;top:244.00px" width="8" height="8" viewBox="0 0 8 8"><circle cx="4" cy="4" r="4" fill="#1f9d3c"/><path d="M1.92 4.08 L3.40 5.52 L6.08 2.72" fill="none" stroke="#fff" stroke-width="1.44" stroke-linecap="round" stroke-linejoin="round"/></svg>
<div class="t" style="left:901.60px;width:300px;text-align:center;top:244.00px;font-size:7.3px;line-height:9px;color:#007bff;">0</div>
<div class="t" style="left:935.60px;width:300px;text-align:center;top:244.00px;font-size:7.3px;line-height:9px;color:#212529;">0</div>
<div class="t" style="left:997.00px;width:300px;text-align:center;top:244.00px;font-size:7.3px;line-height:9px;color:#212529;">Ready</div>
<svg style="position:absolute;left:1171.60px;top:244.00px" width="8" height="8" viewBox="0 0 8 8"><circle cx="4" cy="4" r="4" fill="#1f9d3c"/><path d="M1.92 4.08 L3.40 5.52 L6.08 2.72" fill="none" stroke="#fff" stroke-width="1.44" stroke-linecap="round" stroke-linejoin="round"/></svg>
<div style="position:absolute;left:146.50px;top:286.75px;width:1049.00px;height:36.95px;background:#fff"></div>
<div style="position:absolute;left:146.50px;top:285.75px;width:1049.00px;height:1.00px;background:#e5e7ea"></div>
<svg style="position:absolute;left:154.80px;top:290.35px" width="9.5" height="8.5" viewBox="0 0 9.5 8.5"><path d="M5.2 1.3 L1.7 1.3 Q0.8 1.3 0.8 2.2 L0.8 6.9 Q0.8 7.7 1.7 7.7 L6.3 7.7 Q7.2 7.7 7.2 6.9 L7.2 4.8" fill="none" stroke="#212529" stroke-width="1.1"/><path d="M3.3 4.5 L7.3 0.5 Q7.6 0.2 7.9 0.5 L8.7 1.3 Q9 1.6 8.7 1.9 L4.7 5.9 L3 6.2 Z" fill="#212529"/></svg>
<svg style="position:absolute;left:168.60px;top:290.45px" width="8.6" height="7" viewBox="0 0 8.6 7"><path d="M0.2 2 Q0.2 1.1 1.1 1.1 L2.3 1.1 L2.9 0.1 L5.5 0.1 L6.1 1.1 L7.3 1.1 Q8.2 1.1 8.2 2 L8.2 5.6 Q8.2 6.4 7.3 6.4 L1.1 6.4 Q0.2 6.4 0.2 5.6 Z" fill="#212529"/><circle cx="4.2" cy="3.7" r="1.6" fill="#fff"/><circle cx="4.2" cy="3.7" r="0.85" fill="#212529"/></svg>
<div class="t" style="left:183.64px;top:290.00px;font-size:7.3px;line-height:9px;color:#212529;">31</div>
<svg style="position:absolute;left:192.56px;top:290.25px" width="8" height="8" viewBox="0 0 8 8"><circle cx="4" cy="4" r="4" fill="#1f9d3c"/><path d="M1.92 4.08 L3.40 5.52 L6.08 2.72" fill="none" stroke="#fff" stroke-width="1.44" stroke-linecap="round" stroke-linejoin="round"/></svg>
<div class="t" style="left:67.00px;width:300px;text-align:center;top:290.00px;font-size:7.3px;line-height:9px;color:#212529;">28862</div>
<div class="t" style="left:95.90px;width:300px;text-align:center;top:292.00px;font-size:8.2px;line-height:9px;color:#cc1a30;font-weight:700;">Hidden</div>
<svg style="position:absolute;left:275.00px;top:290.25px" width="12" height="11.5" viewBox="0 0 12 11.5"><path d="M5.5 0.5 L11.2 6.1 L7.4 9.5 L1.8 4.1 Z" fill="#66778a" stroke="#3f5168" stroke-width="0.8" stroke-linejoin="round"/><path d="M4.4 7 L1.2 10.3" stroke="#3f5168" stroke-width="1.9" stroke-linecap="round"/></svg>
<svg style="position:absolute;left:302.40px;top:290.65px" width="14" height="8.9" viewBox="0 0 14 8.9"><defs><clipPath id="f30242906"><rect x="0" y="0" width="14" height="8.9" rx="2"/></clipPath></defs><g clip-path="url(#f30242906)"><rect x="0" y="0" width="14" height="3" fill="#000"/><rect x="0" y="3" width="14" height="3" fill="#dd0000"/><rect x="0" y="6" width="14" height="3" fill="#ffce00"/></g></svg>
<div class="t" style="left:322.40px;top:292.00px;font-size:8.2px;line-height:9px;color:#cc1a30;font-weight:700;">Hidden</div>
<div class="t" style="left:370.50px;width:300px;text-align:center;top:296.00px;font-size:8.2px;line-height:9px;color:#cc1a30;font-weight:700;">Hidden</div>
<svg style="position:absolute;left:650.30px;top:290.05px;border-radius:2px" width="38.5" height="29.3" viewBox="0 0 38.5 29.3"><defs><clipPath id="c65032900"><rect x="0" y="0" width="38.5" height="29.3" rx="2.2"/></clipPath></defs><g clip-path="url(#c65032900)"><rect x="0" y="0" width="38.5" height="29.3" fill="#c8c4bc"/><rect x="0" y="14" width="38.5" height="15.3" fill="#a09a86"/><g transform="translate(2.23 1.76) scale(0.9)"><path d="M3.2 17.6 Q3.6 14.2 7.8 13 L13.4 11.4 L18.2 7 Q19.8 5.8 23 5.8 L30.6 6 Q33.4 6.2 34.5 8.8 L36.4 12.8 Q37.2 14.6 36.9 18.4 L36.4 22.4 Q36 23.8 34.2 23.8 L9 27 Q4.4 27.4 3.6 24.6 Z" fill="#6b7070"/><path d="M14 11.6 L18.8 7.3 L25.6 7.3 L22.8 12.2 Z" fill="#2b2f33" opacity="0.9"/><path d="M23.8 12 L26.5 7.4 L31.6 7.6 L34 11.4 Z" fill="#2b2f33" opacity="0.7"/><path d="M5 17.4 L11 16.4 L11.5 18 L5.5 19 Z" fill="#e8e8e8" opacity="0.45"/><circle cx="10.6" cy="25.4" r="3.1" fill="#151618"/><circle cx="31" cy="22.6" r="2.9" fill="#151618"/></g></g></svg>
<svg style="position:absolute;left:691.50px;top:290.05px;border-radius:2px" width="38.5" height="29.3" viewBox="0 0 38.5 29.3"><defs><clipPath id="c69152900"><rect x="0" y="0" width="38.5" height="29.3" rx="2.2"/></clipPath></defs><g clip-path="url(#c69152900)"><rect x="0" y="0" width="38.5" height="29.3" fill="#d8d6d0"/><rect x="0" y="14" width="38.5" height="15.3" fill="#c6bca8"/><g transform="translate(2.23 1.76) scale(0.9)"><path d="M3.2 17.6 Q3.6 14.2 7.8 13 L13.4 11.4 L18.2 7 Q19.8 5.8 23 5.8 L30.6 6 Q33.4 6.2 34.5 8.8 L36.4 12.8 Q37.2 14.6 36.9 18.4 L36.4 22.4 Q36 23.8 34.2 23.8 L9 27 Q4.4 27.4 3.6 24.6 Z" fill="#3b3e40"/><path d="M14 11.6 L18.8 7.3 L25.6 7.3 L22.8 12.2 Z" fill="#1d2022" opacity="0.9"/><path d="M23.8 12 L26.5 7.4 L31.6 7.6 L34 11.4 Z" fill="#1d2022" opacity="0.7"/><path d="M5 17.4 L11 16.4 L11.5 18 L5.5 19 Z" fill="#e8e8e8" opacity="0.45"/><circle cx="10.6" cy="25.4" r="3.1" fill="#151618"/><circle cx="31" cy="22.6" r="2.9" fill="#151618"/></g></g></svg>
<svg style="position:absolute;left:732.70px;top:290.05px;border-radius:2px" width="38.5" height="29.3" viewBox="0 0 38.5 29.3"><defs><clipPath id="c73262900"><rect x="0" y="0" width="38.5" height="29.3" rx="2.2"/></clipPath></defs><g clip-path="url(#c73262900)"><rect x="0" y="0" width="38.5" height="29.3" fill="#8a9098"/><rect x="0" y="14" width="38.5" height="15.3" fill="#7c7a70"/><g transform="translate(2.23 1.76) scale(0.9)"><path d="M3.2 17.6 Q3.6 14.2 7.8 13 L13.4 11.4 L18.2 7 Q19.8 5.8 23 5.8 L30.6 6 Q33.4 6.2 34.5 8.8 L36.4 12.8 Q37.2 14.6 36.9 18.4 L36.4 22.4 Q36 23.8 34.2 23.8 L9 27 Q4.4 27.4 3.6 24.6 Z" fill="#2f3336"/><path d="M14 11.6 L18.8 7.3 L25.6 7.3 L22.8 12.2 Z" fill="#1a1c1e" opacity="0.9"/><path d="M23.8 12 L26.5 7.4 L31.6 7.6 L34 11.4 Z" fill="#1a1c1e" opacity="0.7"/><path d="M5 17.4 L11 16.4 L11.5 18 L5.5 19 Z" fill="#e8e8e8" opacity="0.45"/><circle cx="10.6" cy="25.4" r="3.1" fill="#151618"/><circle cx="31" cy="22.6" r="2.9" fill="#151618"/></g></g></svg>
<div class="t" style="left:788.00px;top:290.00px;font-size:7.3px;line-height:9px;color:#212529;">EU private</div>
<div class="t" style="left:788.00px;top:301.00px;font-size:7.3px;line-height:9px;color:#212529;">EU company</div>
<div class="t" style="left:788.00px;top:311.00px;font-size:7.3px;line-height:9px;color:#212529;">not EU</div>
<div class="t" style="left:712.70px;width:300px;text-align:center;top:290.00px;font-size:7.3px;line-height:9px;color:#212529;">Today 11:30</div>
<div class="t" style="left:767.00px;width:300px;text-align:center;top:290.00px;font-size:7.3px;line-height:9px;color:#212529;">2025-12-03</div>
<div class="t" style="left:767.00px;width:300px;text-align:center;top:301.00px;font-size:7.3px;line-height:9px;color:#212529;">09:00</div>
<div class="t" style="left:804.80px;width:300px;text-align:center;top:290.00px;font-size:7.3px;line-height:9px;color:#212529;">32</div>
<div class="t" style="left:837.80px;width:300px;text-align:center;top:290.00px;font-size:7.3px;line-height:9px;color:#007bff;">32</div>
<div class="t" style="left:874.30px;width:300px;text-align:center;top:290.00px;font-size:7.3px;line-height:9px;color:#212529;">31</div>
<div class="t" style="left:901.60px;width:300px;text-align:center;top:290.00px;font-size:7.3px;line-height:9px;color:#007bff;">0</div>
<div class="t" style="left:935.60px;width:300px;text-align:center;top:290.00px;font-size:7.3px;line-height:9px;color:#212529;">0</div>
<div class="t" style="left:997.00px;width:300px;text-align:center;top:290.00px;font-size:7.3px;line-height:9px;color:#212529;">Ready</div>
<svg style="position:absolute;left:1171.60px;top:290.25px" width="8" height="8" viewBox="0 0 8 8"><circle cx="4" cy="4" r="4" fill="#1f9d3c"/><path d="M1.92 4.08 L3.40 5.52 L6.08 2.72" fill="none" stroke="#fff" stroke-width="1.44" stroke-linecap="round" stroke-linejoin="round"/></svg>
<div style="position:absolute;left:146.50px;top:323.70px;width:1049.00px;height:46.40px;background:#f9f9f9"></div>
<div style="position:absolute;left:146.50px;top:322.70px;width:1049.00px;height:1.00px;background:#e5e7ea"></div>
<svg style="position:absolute;left:154.80px;top:327.30px" width="9.5" height="8.5" viewBox="0 0 9.5 8.5"><path d="M5.2 1.3 L1.7 1.3 Q0.8 1.3 0.8 2.2 L0.8 6.9 Q0.8 7.7 1.7 7.7 L6.3 7.7 Q7.2 7.7 7.2 6.9 L7.2 4.8" fill="none" stroke="#212529" stroke-width="1.1"/><path d="M3.3 4.5 L7.3 0.5 Q7.6 0.2 7.9 0.5 L8.7 1.3 Q9 1.6 8.7 1.9 L4.7 5.9 L3 6.2 Z" fill="#212529"/></svg>
<svg style="position:absolute;left:168.60px;top:327.40px" width="8.6" height="7" viewBox="0 0 8.6 7"><path d="M0.2 2 Q0.2 1.1 1.1 1.1 L2.3 1.1 L2.9 0.1 L5.5 0.1 L6.1 1.1 L7.3 1.1 Q8.2 1.1 8.2 2 L8.2 5.6 Q8.2 6.4 7.3 6.4 L1.1 6.4 Q0.2 6.4 0.2 5.6 Z" fill="#212529"/><circle cx="4.2" cy="3.7" r="1.6" fill="#fff"/><circle cx="4.2" cy="3.7" r="0.85" fill="#212529"/></svg>
<div class="t" style="left:185.67px;top:327.00px;font-size:7.3px;line-height:9px;color:#212529;">1</div>
<svg style="position:absolute;left:190.53px;top:327.20px" width="8" height="8" viewBox="0 0 8 8"><circle cx="4" cy="4" r="4" fill="#1f9d3c"/><path d="M1.92 4.08 L3.40 5.52 L6.08 2.72" fill="none" stroke="#fff" stroke-width="1.44" stroke-linecap="round" stroke-linejoin="round"/></svg>
<div class="t" style="left:67.00px;width:300px;text-align:center;top:327.00px;font-size:7.3px;line-height:9px;color:#212529;">28861</div>
<div class="t" style="left:95.90px;width:300px;text-align:center;top:329.00px;font-size:8.2px;line-height:9px;color:#cc1a30;font-weight:700;">Hidden</div>
<svg style="position:absolute;left:275.00px;top:327.20px" width="12" height="11.5" viewBox="0 0 12 11.5"><path d="M5.5 0.5 L11.2 6.1 L7.4 9.5 L1.8 4.1 Z" fill="#66778a" stroke="#3f5168" stroke-width="0.8" stroke-linejoin="round"/><path d="M4.4 7 L1.2 10.3" stroke="#3f5168" stroke-width="1.9" stroke-linecap="round"/></svg>
<svg style="position:absolute;left:302.40px;top:327.60px" width="14" height="8.9" viewBox="0 0 14 8.9"><defs><clipPath id="f30243275"><rect x="0" y="0" width="14" height="8.9" rx="2"/></clipPath></defs><g clip-path="url(#f30243275)"><rect x="0" y="0" width="4.67" height="9" fill="#009246"/><rect x="4.67" y="0" width="4.67" height="9" fill="#fff"/><rect x="9.33" y="0" width="4.67" height="9" fill="#ce2b37"/></g></svg>
<div class="t" style="left:302.70px;top:339.00px;font-size:7.0px;line-height:7px;color:#343a40;">IT</div>
<div class="t" style="left:322.40px;top:329.00px;font-size:8.2px;line-height:9px;color:#cc1a30;font-weight:700;">Hidden</div>
<div class="t" style="left:370.50px;width:300px;text-align:center;top:333.00px;font-size:8.2px;line-height:9px;color:#cc1a30;font-weight:700;">Hidden</div>
<svg style="position:absolute;left:650.30px;top:327.00px;border-radius:2px" width="38.5" height="29.3" viewBox="0 0 38.5 29.3"><defs><clipPath id="c65033270"><rect x="0" y="0" width="38.5" height="29.3" rx="2.2"/></clipPath></defs><g clip-path="url(#c65033270)"><rect x="0" y="0" width="38.5" height="29.3" fill="#e6e6e6"/><rect x="0" y="14" width="38.5" height="15.3" fill="#b2b2b2"/><g transform="translate(2.23 1.76) scale(0.9)"><path d="M3.2 17.6 Q3.6 14.2 7.8 13 L13.4 11.4 L18.2 7 Q19.8 5.8 23 5.8 L30.6 6 Q33.4 6.2 34.5 8.8 L36.4 12.8 Q37.2 14.6 36.9 18.4 L36.4 22.4 Q36 23.8 34.2 23.8 L9 27 Q4.4 27.4 3.6 24.6 Z" fill="#2a2e36"/><path d="M14 11.6 L18.8 7.3 L25.6 7.3 L22.8 12.2 Z" fill="#1a1d22" opacity="0.9"/><path d="M23.8 12 L26.5 7.4 L31.6 7.6 L34 11.4 Z" fill="#1a1d22" opacity="0.7"/><path d="M5 17.4 L11 16.4 L11.5 18 L5.5 19 Z" fill="#e8e8e8" opacity="0.45"/><circle cx="10.6" cy="25.4" r="3.1" fill="#151618"/><circle cx="31" cy="22.6" r="2.9" fill="#151618"/></g></g></svg>
<div class="t" style="left:788.00px;top:327.00px;font-size:7.3px;line-height:9px;color:#212529;">without login</div>
<div class="t" style="left:788.00px;top:338.00px;font-size:7.3px;line-height:9px;color:#212529;">EU private</div>
<div class="t" style="left:788.00px;top:348.00px;font-size:7.3px;line-height:9px;color:#212529;">EU company</div>
<div class="t" style="left:788.00px;top:359.00px;font-size:7.3px;line-height:9px;color:#212529;">not EU</div>
<div class="t" style="left:712.70px;width:300px;text-align:center;top:327.00px;font-size:7.3px;line-height:9px;color:#212529;">Today 11:20</div>
<div class="t" style="left:767.00px;width:300px;text-align:center;top:327.00px;font-size:7.3px;line-height:9px;color:#212529;">2025-12-04</div>
<div class="t" style="left:767.00px;width:300px;text-align:center;top:338.00px;font-size:7.3px;line-height:9px;color:#212529;">17:00</div>
<div class="t" style="left:804.80px;width:300px;text-align:center;top:327.00px;font-size:7.3px;line-height:9px;color:#212529;">1</div>
<div class="t" style="left:837.80px;width:300px;text-align:center;top:327.00px;font-size:7.3px;line-height:9px;color:#007bff;">1</div>
<div class="t" style="left:1017.87px;top:327.00px;font-size:7.3px;line-height:9px;color:#212529;">1</div>
<svg style="position:absolute;left:1022.73px;top:327.20px" width="8" height="8" viewBox="0 0 8 8"><circle cx="4" cy="4" r="4" fill="#1f9d3c"/><path d="M1.92 4.08 L3.40 5.52 L6.08 2.72" fill="none" stroke="#fff" stroke-width="1.44" stroke-linecap="round" stroke-linejoin="round"/></svg>
<div class="t" style="left:901.60px;width:300px;text-align:center;top:327.00px;font-size:7.3px;line-height:9px;color:#007bff;">0</div>
<div class="t" style="left:935.60px;width:300px;text-align:center;top:327.00px;font-size:7.3px;line-height:9px;color:#212529;">0</div>
<div class="t" style="left:997.00px;width:300px;text-align:center;top:327.00px;font-size:7.3px;line-height:9px;color:#212529;">Ready</div>
<svg style="position:absolute;left:1171.60px;top:327.20px" width="8" height="8" viewBox="0 0 8 8"><circle cx="4" cy="4" r="4" fill="#1f9d3c"/><path d="M1.92 4.08 L3.40 5.52 L6.08 2.72" fill="none" stroke="#fff" stroke-width="1.44" stroke-linecap="round" stroke-linejoin="round"/></svg>
<div style="position:absolute;left:146.50px;top:370.10px;width:1049.00px;height:36.30px;background:#fff"></div>
<div style="position:absolute;left:146.50px;top:369.10px;width:1049.00px;height:1.00px;background:#e5e7ea"></div>
<svg style="position:absolute;left:154.80px;top:373.70px" width="9.5" height="8.5" viewBox="0 0 9.5 8.5"><path d="M5.2 1.3 L1.7 1.3 Q0.8 1.3 0.8 2.2 L0.8 6.9 Q0.8 7.7 1.7 7.7 L6.3 7.7 Q7.2 7.7 7.2 6.9 L7.2 4.8" fill="none" stroke="#212529" stroke-width="1.1"/><path d="M3.3 4.5 L7.3 0.5 Q7.6 0.2 7.9 0.5 L8.7 1.3 Q9 1.6 8.7 1.9 L4.7 5.9 L3 6.2 Z" fill="#212529"/></svg>
<svg style="position:absolute;left:168.60px;top:373.80px" width="8.6" height="7" viewBox="0 0 8.6 7"><path d="M0.2 2 Q0.2 1.1 1.1 1.1 L2.3 1.1 L2.9 0.1 L5.5 0.1 L6.1 1.1 L7.3 1.1 Q8.2 1.1 8.2 2 L8.2 5.6 Q8.2 6.4 7.3 6.4 L1.1 6.4 Q0.2 6.4 0.2 5.6 Z" fill="#212529"/><circle cx="4.2" cy="3.7" r="1.6" fill="#fff"/><circle cx="4.2" cy="3.7" r="0.85" fill="#212529"/></svg>
<div class="t" style="left:183.64px;top:374.00px;font-size:7.3px;line-height:9px;color:#212529;">16</div>
<svg style="position:absolute;left:192.56px;top:373.60px" width="8" height="8" viewBox="0 0 8 8"><circle cx="4" cy="4" r="4" fill="#1f9d3c"/><path d="M1.92 4.08 L3.40 5.52 L6.08 2.72" fill="none" stroke="#fff" stroke-width="1.44" stroke-linecap="round" stroke-linejoin="round"/></svg>
<div class="t" style="left:67.00px;width:300px;text-align:center;top:374.00px;font-size:7.3px;line-height:9px;color:#212529;">28859</div>
<div class="t" style="left:95.90px;width:300px;text-align:center;top:375.00px;font-size:8.2px;line-height:9px;color:#cc1a30;font-weight:700;">Hidden</div>
<svg style="position:absolute;left:275.00px;top:373.60px" width="12" height="11.5" viewBox="0 0 12 11.5"><path d="M5.5 0.5 L11.2 6.1 L7.4 9.5 L1.8 4.1 Z" fill="#66778a" stroke="#3f5168" stroke-width="0.8" stroke-linejoin="round"/><path d="M4.4 7 L1.2 10.3" stroke="#3f5168" stroke-width="1.9" stroke-linecap="round"/></svg>
<svg style="position:absolute;left:302.40px;top:374.00px" width="14" height="8.9" viewBox="0 0 14 8.9"><defs><clipPath id="f30243740"><rect x="0" y="0" width="14" height="8.9" rx="2"/></clipPath></defs><g clip-path="url(#f30243740)"><rect x="0" y="0" width="14" height="3" fill="#000"/><rect x="0" y="3" width="14" height="3" fill="#dd0000"/><rect x="0" y="6" width="14" height="3" fill="#ffce00"/></g></svg>
<div class="t" style="left:322.40px;top:375.00px;font-size:8.2px;line-height:9px;color:#cc1a30;font-weight:700;">Hidden</div>
<div class="t" style="left:370.50px;width:300px;text-align:center;top:379.00px;font-size:8.2px;line-height:9px;color:#cc1a30;font-weight:700;">Hidden</div>
<svg style="position:absolute;left:650.30px;top:373.40px;border-radius:2px" width="38.5" height="29.3" viewBox="0 0 38.5 29.3"><defs><clipPath id="c65033734"><rect x="0" y="0" width="38.5" height="29.3" rx="2.2"/></clipPath></defs><g clip-path="url(#c65033734)"><rect x="0" y="0" width="38.5" height="29.3" fill="#8e959a"/><rect x="0" y="14" width="38.5" height="15.3" fill="#a7a6a2"/><g transform="translate(2.23 1.76) scale(0.9)"><path d="M3.2 17.6 Q3.6 14.2 7.8 13 L13.4 11.4 L18.2 7 Q19.8 5.8 23 5.8 L30.6 6 Q33.4 6.2 34.5 8.8 L36.4 12.8 Q37.2 14.6 36.9 18.4 L36.4 22.4 Q36 23.8 34.2 23.8 L9 27 Q4.4 27.4 3.6 24.6 Z" fill="#1f2327"/><path d="M14 11.6 L18.8 7.3 L25.6 7.3 L22.8 12.2 Z" fill="#101214" opacity="0.9"/><path d="M23.8 12 L26.5 7.4 L31.6 7.6 L34 11.4 Z" fill="#101214" opacity="0.7"/><path d="M5 17.4 L11 16.4 L11.5 18 L5.5 19 Z" fill="#e8e8e8" opacity="0.45"/><circle cx="10.6" cy="25.4" r="3.1" fill="#151618"/><circle cx="31" cy="22.6" r="2.9" fill="#151618"/></g></g></svg>
<svg style="position:absolute;left:691.50px;top:373.40px;border-radius:2px" width="38.5" height="29.3" viewBox="0 0 38.5 29.3"><defs><clipPath id="c69153734"><rect x="0" y="0" width="38.5" height="29.3" rx="2.2"/></clipPath></defs><g clip-path="url(#c69153734)"><rect x="0" y="0" width="38.5" height="29.3" fill="#9c9a92"/><rect x="0" y="14" width="38.5" height="15.3" fill="#9f9d98"/><g transform="translate(2.23 1.76) scale(0.9)"><path d="M3.2 17.6 Q3.6 14.2 7.8 13 L13.4 11.4 L18.2 7 Q19.8 5.8 23 5.8 L30.6 6 Q33.4 6.2 34.5 8.8 L36.4 12.8 Q37.2 14.6 36.9 18.4 L36.4 22.4 Q36 23.8 34.2 23.8 L9 27 Q4.4 27.4 3.6 24.6 Z" fill="#8d9094"/><path d="M14 11.6 L18.8 7.3 L25.6 7.3 L22.8 12.2 Z" fill="#3a3d40" opacity="0.9"/><path d="M23.8 12 L26.5 7.4 L31.6 7.6 L34 11.4 Z" fill="#3a3d40" opacity="0.7"/><path d="M5 17.4 L11 16.4 L11.5 18 L5.5 19 Z" fill="#e8e8e8" opacity="0.45"/><circle cx="10.6" cy="25.4" r="3.1" fill="#151618"/><circle cx="31" cy="22.6" r="2.9" fill="#151618"/></g></g></svg>
<svg style="position:absolute;left:732.70px;top:373.40px;border-radius:2px" width="38.5" height="29.3" viewBox="0 0 38.5 29.3"><defs><clipPath id="c73263734"><rect x="0" y="0" width="38.5" height="29.3" rx="2.2"/></clipPath></defs><g clip-path="url(#c73263734)"><rect x="0" y="0" width="38.5" height="29.3" fill="#cfcfcd"/><rect x="0" y="14" width="38.5" height="15.3" fill="#b3b2af"/><g transform="translate(2.23 1.76) scale(0.9)"><path d="M3.2 17.6 Q3.6 14.2 7.8 13 L13.4 11.4 L18.2 7 Q19.8 5.8 23 5.8 L30.6 6 Q33.4 6.2 34.5 8.8 L36.4 12.8 Q37.2 14.6 36.9 18.4 L36.4 22.4 Q36 23.8 34.2 23.8 L9 27 Q4.4 27.4 3.6 24.6 Z" fill="#32405a"/><path d="M14 11.6 L18.8 7.3 L25.6 7.3 L22.8 12.2 Z" fill="#1e2534" opacity="0.9"/><path d="M23.8 12 L26.5 7.4 L31.6 7.6 L34 11.4 Z" fill="#1e2534" opacity="0.7"/><path d="M5 17.4 L11 16.4 L11.5 18 L5.5 19 Z" fill="#e8e8e8" opacity="0.45"/><circle cx="10.6" cy="25.4" r="3.1" fill="#151618"/><circle cx="31" cy="22.6" r="2.9" fill="#151618"/></g></g></svg>
<div class="t" style="left:788.00px;top:374.00px;font-size:7.3px;line-height:9px;color:#212529;">EU private</div>
<div class="t" style="left:788.00px;top:384.00px;font-size:7.3px;line-height:9px;color:#212529;">EU company</div>
<div class="t" style="left:788.00px;top:395.00px;font-size:7.3px;line-height:9px;color:#212529;">not EU</div>
<div class="t" style="left:712.70px;width:300px;text-align:center;top:374.00px;font-size:7.3px;line-height:9px;color:#212529;">Today 11:00</div>
<div class="t" style="left:767.00px;width:300px;text-align:center;top:374.00px;font-size:7.3px;line-height:9px;color:#212529;">2025-12-03</div>
<div class="t" style="left:767.00px;width:300px;text-align:center;top:384.00px;font-size:7.3px;line-height:9px;color:#212529;">11:00</div>
<div class="t" style="left:804.80px;width:300px;text-align:center;top:374.00px;font-size:7.3px;line-height:9px;color:#212529;">16</div>
<div class="t" style="left:837.80px;width:300px;text-align:center;top:374.00px;font-size:7.3px;line-height:9px;color:#007bff;">16</div>
<div class="t" style="left:1015.84px;top:374.00px;font-size:7.3px;line-height:9px;color:#212529;">16</div>
<svg style="position:absolute;left:1024.76px;top:373.60px" width="8" height="8" viewBox="0 0 8 8"><circle cx="4" cy="4" r="4" fill="#1f9d3c"/><path d="M1.92 4.08 L3.40 5.52 L6.08 2.72" fill="none" stroke="#fff" stroke-width="1.44" stroke-linecap="round" stroke-linejoin="round"/></svg>
<div class="t" style="left:901.60px;width:300px;text-align:center;top:374.00px;font-size:7.3px;line-height:9px;color:#007bff;">0</div>
<div class="t" style="left:935.60px;width:300px;text-align:center;top:374.00px;font-size:7.3px;line-height:9px;color:#212529;">0</div>
<div class="t" style="left:997.00px;width:300px;text-align:center;top:374.00px;font-size:7.3px;line-height:9px;color:#212529;">Ready</div>
<svg style="position:absolute;left:1171.60px;top:373.60px" width="8" height="8" viewBox="0 0 8 8"><circle cx="4" cy="4" r="4" fill="#1f9d3c"/><path d="M1.92 4.08 L3.40 5.52 L6.08 2.72" fill="none" stroke="#fff" stroke-width="1.44" stroke-linecap="round" stroke-linejoin="round"/></svg>
<div style="position:absolute;left:146.50px;top:406.40px;width:1049.00px;height:36.50px;background:#f9f9f9"></div>
<div style="position:absolute;left:146.50px;top:405.40px;width:1049.00px;height:1.00px;background:#e5e7ea"></div>
<svg style="position:absolute;left:154.80px;top:410.00px" width="9.5" height="8.5" viewBox="0 0 9.5 8.5"><path d="M5.2 1.3 L1.7 1.3 Q0.8 1.3 0.8 2.2 L0.8 6.9 Q0.8 7.7 1.7 7.7 L6.3 7.7 Q7.2 7.7 7.2 6.9 L7.2 4.8" fill="none" stroke="#212529" stroke-width="1.1"/><path d="M3.3 4.5 L7.3 0.5 Q7.6 0.2 7.9 0.5 L8.7 1.3 Q9 1.6 8.7 1.9 L4.7 5.9 L3 6.2 Z" fill="#212529"/></svg>
<svg style="position:absolute;left:168.60px;top:410.10px" width="8.6" height="7" viewBox="0 0 8.6 7"><path d="M0.2 2 Q0.2 1.1 1.1 1.1 L2.3 1.1 L2.9 0.1 L5.5 0.1 L6.1 1.1 L7.3 1.1 Q8.2 1.1 8.2 2 L8.2 5.6 Q8.2 6.4 7.3 6.4 L1.1 6.4 Q0.2 6.4 0.2 5.6 Z" fill="#212529"/><circle cx="4.2" cy="3.7" r="1.6" fill="#fff"/><circle cx="4.2" cy="3.7" r="0.85" fill="#212529"/></svg>
<div class="t" style="left:183.64px;top:410.00px;font-size:7.3px;line-height:9px;color:#212529;">30</div>
<svg style="position:absolute;left:192.56px;top:409.90px" width="8" height="8" viewBox="0 0 8 8"><circle cx="4" cy="4" r="4" fill="#1f9d3c"/><path d="M1.92 4.08 L3.40 5.52 L6.08 2.72" fill="none" stroke="#fff" stroke-width="1.44" stroke-linecap="round" stroke-linejoin="round"/></svg>
<div class="t" style="left:67.00px;width:300px;text-align:center;top:410.00px;font-size:7.3px;line-height:9px;color:#212529;">28858</div>
<div class="t" style="left:95.90px;width:300px;text-align:center;top:412.00px;font-size:8.2px;line-height:9px;color:#cc1a30;font-weight:700;">Hidden</div>
<svg style="position:absolute;left:273.80px;top:410.50px" width="13.5" height="10" viewBox="0 0 13.5 10"><rect x="0.7" y="0.75" width="12" height="8.4" rx="1.7" fill="none" stroke="#56687c" stroke-width="1.35"/><rect x="1" y="0.9" width="11.4" height="1.2" fill="#56687c"/><path d="M1.6 2.7 Q4 3.2 5.4 5.2 L6.7 6.3 L8 5.2 Q9.4 3.2 11.8 2.7" fill="none" stroke="#56687c" stroke-width="1"/><path d="M5 4.4 L8.4 4.4 L6.7 6.6 Z" fill="#56687c"/></svg>
<svg style="position:absolute;left:302.40px;top:410.30px" width="14" height="8.9" viewBox="0 0 14 8.9"><defs><clipPath id="f30244103"><rect x="0" y="0" width="14" height="8.9" rx="2"/></clipPath></defs><g clip-path="url(#f30244103)"><rect x="0" y="0" width="14" height="3" fill="#000"/><rect x="0" y="3" width="14" height="3" fill="#dd0000"/><rect x="0" y="6" width="14" height="3" fill="#ffce00"/></g></svg>
<div class="t" style="left:322.40px;top:412.00px;font-size:8.2px;line-height:9px;color:#cc1a30;font-weight:700;">Hidden</div>
<div class="t" style="left:370.50px;width:300px;text-align:center;top:415.00px;font-size:8.2px;line-height:9px;color:#cc1a30;font-weight:700;">Hidden</div>
<svg style="position:absolute;left:650.30px;top:409.70px;border-radius:2px" width="38.5" height="29.3" viewBox="0 0 38.5 29.3"><defs><clipPath id="c65034097"><rect x="0" y="0" width="38.5" height="29.3" rx="2.2"/></clipPath></defs><g clip-path="url(#c65034097)"><rect x="0" y="0" width="38.5" height="29.3" fill="#a6b08a"/><rect x="0" y="14" width="38.5" height="15.3" fill="#a8a49c"/><g transform="translate(2.23 1.76) scale(0.9)"><path d="M3.2 17.6 Q3.6 14.2 7.8 13 L13.4 11.4 L18.2 7 Q19.8 5.8 23 5.8 L30.6 6 Q33.4 6.2 34.5 8.8 L36.4 12.8 Q37.2 14.6 36.9 18.4 L36.4 22.4 Q36 23.8 34.2 23.8 L9 27 Q4.4 27.4 3.6 24.6 Z" fill="#3a4654"/><path d="M14 11.6 L18.8 7.3 L25.6 7.3 L22.8 12.2 Z" fill="#1e242c" opacity="0.9"/><path d="M23.8 12 L26.5 7.4 L31.6 7.6 L34 11.4 Z" fill="#1e242c" opacity="0.7"/><path d="M5 17.4 L11 16.4 L11.5 18 L5.5 19 Z" fill="#e8e8e8" opacity="0.45"/><circle cx="10.6" cy="25.4" r="3.1" fill="#151618"/><circle cx="31" cy="22.6" r="2.9" fill="#151618"/></g></g></svg>
<svg style="position:absolute;left:691.50px;top:409.70px;border-radius:2px" width="38.5" height="29.3" viewBox="0 0 38.5 29.3"><defs><clipPath id="c69154097"><rect x="0" y="0" width="38.5" height="29.3" rx="2.2"/></clipPath></defs><g clip-path="url(#c69154097)"><rect x="0" y="0" width="38.5" height="29.3" fill="#c6c4be"/><rect x="0" y="14" width="38.5" height="15.3" fill="#b3b0a8"/><g transform="translate(2.23 1.76) scale(0.9)"><path d="M3.2 17.6 Q3.6 14.2 7.8 13 L13.4 11.4 L18.2 7 Q19.8 5.8 23 5.8 L30.6 6 Q33.4 6.2 34.5 8.8 L36.4 12.8 Q37.2 14.6 36.9 18.4 L36.4 22.4 Q36 23.8 34.2 23.8 L9 27 Q4.4 27.4 3.6 24.6 Z" fill="#34383e"/><path d="M14 11.6 L18.8 7.3 L25.6 7.3 L22.8 12.2 Z" fill="#1e2226" opacity="0.9"/><path d="M23.8 12 L26.5 7.4 L31.6 7.6 L34 11.4 Z" fill="#1e2226" opacity="0.7"/><path d="M5 17.4 L11 16.4 L11.5 18 L5.5 19 Z" fill="#e8e8e8" opacity="0.45"/><circle cx="10.6" cy="25.4" r="3.1" fill="#151618"/><circle cx="31" cy="22.6" r="2.9" fill="#151618"/></g></g></svg>
<svg style="position:absolute;left:732.70px;top:409.70px;border-radius:2px" width="38.5" height="29.3" viewBox="0 0 38.5 29.3"><defs><clipPath id="c73264097"><rect x="0" y="0" width="38.5" height="29.3" rx="2.2"/></clipPath></defs><g clip-path="url(#c73264097)"><rect x="0" y="0" width="38.5" height="29.3" fill="#aab0aa"/><rect x="0" y="14" width="38.5" height="15.3" fill="#a8a49a"/><g transform="translate(2.23 1.76) scale(0.9)"><path d="M3.2 17.6 Q3.6 14.2 7.8 13 L13.4 11.4 L18.2 7 Q19.8 5.8 23 5.8 L30.6 6 Q33.4 6.2 34.5 8.8 L36.4 12.8 Q37.2 14.6 36.9 18.4 L36.4 22.4 Q36 23.8 34.2 23.8 L9 27 Q4.4 27.4 3.6 24.6 Z" fill="#283850"/><path d="M14 11.6 L18.8 7.3 L25.6 7.3 L22.8 12.2 Z" fill="#141c28" opacity="0.9"/><path d="M23.8 12 L26.5 7.4 L31.6 7.6 L34 11.4 Z" fill="#141c28" opacity="0.7"/><path d="M5 17.4 L11 16.4 L11.5 18 L5.5 19 Z" fill="#e8e8e8" opacity="0.45"/><circle cx="10.6" cy="25.4" r="3.1" fill="#151618"/><circle cx="31" cy="22.6" r="2.9" fill="#151618"/></g></g></svg>
<div class="t" style="left:788.00px;top:410.00px;font-size:7.3px;line-height:9px;color:#212529;">EU private</div>
<div class="t" style="left:788.00px;top:421.00px;font-size:7.3px;line-height:9px;color:#212529;">EU company</div>
<div class="t" style="left:712.70px;width:300px;text-align:center;top:410.00px;font-size:7.3px;line-height:9px;color:#212529;">Today 11:00</div>
<div class="t" style="left:767.00px;width:300px;text-align:center;top:410.00px;font-size:7.3px;line-height:9px;color:#212529;">Tomorrow</div>
<div class="t" style="left:767.00px;width:300px;text-align:center;top:420.00px;font-size:7.3px;line-height:9px;color:#212529;">10:00</div>
<div class="t" style="left:804.80px;width:300px;text-align:center;top:410.00px;font-size:7.3px;line-height:9px;color:#212529;">30</div>
<div class="t" style="left:837.80px;width:300px;text-align:center;top:410.00px;font-size:7.3px;line-height:9px;color:#007bff;">30</div>
<div class="t" style="left:874.30px;width:300px;text-align:center;top:410.00px;font-size:7.3px;line-height:9px;color:#212529;">24</div>
<div class="t" style="left:901.60px;width:300px;text-align:center;top:410.00px;font-size:7.3px;line-height:9px;color:#007bff;">0</div>
<div class="t" style="left:935.60px;width:300px;text-align:center;top:410.00px;font-size:7.3px;line-height:9px;color:#212529;">0</div>
<div class="t" style="left:997.00px;width:300px;text-align:center;top:410.00px;font-size:7.3px;line-height:9px;color:#212529;">Ready</div>
<svg style="position:absolute;left:1171.60px;top:409.90px" width="8" height="8" viewBox="0 0 8 8"><circle cx="4" cy="4" r="4" fill="#1f9d3c"/><path d="M1.92 4.08 L3.40 5.52 L6.08 2.72" fill="none" stroke="#fff" stroke-width="1.44" stroke-linecap="round" stroke-linejoin="round"/></svg>
<div style="position:absolute;left:146.50px;top:442.90px;width:1049.00px;height:47.00px;background:#fff"></div>
<div style="position:absolute;left:146.50px;top:441.90px;width:1049.00px;height:1.00px;background:#e5e7ea"></div>
<svg style="position:absolute;left:154.80px;top:446.50px" width="9.5" height="8.5" viewBox="0 0 9.5 8.5"><path d="M5.2 1.3 L1.7 1.3 Q0.8 1.3 0.8 2.2 L0.8 6.9 Q0.8 7.7 1.7 7.7 L6.3 7.7 Q7.2 7.7 7.2 6.9 L7.2 4.8" fill="none" stroke="#212529" stroke-width="1.1"/><path d="M3.3 4.5 L7.3 0.5 Q7.6 0.2 7.9 0.5 L8.7 1.3 Q9 1.6 8.7 1.9 L4.7 5.9 L3 6.2 Z" fill="#212529"/></svg>
<svg style="position:absolute;left:168.60px;top:446.60px" width="8.6" height="7" viewBox="0 0 8.6 7"><path d="M0.2 2 Q0.2 1.1 1.1 1.1 L2.3 1.1 L2.9 0.1 L5.5 0.1 L6.1 1.1 L7.3 1.1 Q8.2 1.1 8.2 2 L8.2 5.6 Q8.2 6.4 7.3 6.4 L1.1 6.4 Q0.2 6.4 0.2 5.6 Z" fill="#212529"/><circle cx="4.2" cy="3.7" r="1.6" fill="#fff"/><circle cx="4.2" cy="3.7" r="0.85" fill="#212529"/></svg>
<div class="t" style="left:183.64px;top:447.00px;font-size:7.3px;line-height:9px;color:#212529;">84</div>
<svg style="position:absolute;left:192.56px;top:446.40px" width="8" height="8" viewBox="0 0 8 8"><circle cx="4" cy="4" r="4" fill="#1f9d3c"/><path d="M1.92 4.08 L3.40 5.52 L6.08 2.72" fill="none" stroke="#fff" stroke-width="1.44" stroke-linecap="round" stroke-linejoin="round"/></svg>
<div class="t" style="left:67.00px;width:300px;text-align:center;top:447.00px;font-size:7.3px;line-height:9px;color:#212529;">28857</div>
<div class="t" style="left:95.90px;width:300px;text-align:center;top:448.00px;font-size:8.2px;line-height:9px;color:#cc1a30;font-weight:700;">Hidden</div>
<svg style="position:absolute;left:273.80px;top:447.00px" width="13.5" height="10" viewBox="0 0 13.5 10"><rect x="0.7" y="0.75" width="12" height="8.4" rx="1.7" fill="none" stroke="#56687c" stroke-width="1.35"/><rect x="1" y="0.9" width="11.4" height="1.2" fill="#56687c"/><path d="M1.6 2.7 Q4 3.2 5.4 5.2 L6.7 6.3 L8 5.2 Q9.4 3.2 11.8 2.7" fill="none" stroke="#56687c" stroke-width="1"/><path d="M5 4.4 L8.4 4.4 L6.7 6.6 Z" fill="#56687c"/></svg>
<svg style="position:absolute;left:302.40px;top:446.80px" width="14" height="8.9" viewBox="0 0 14 8.9"><defs><clipPath id="f30244468"><rect x="0" y="0" width="14" height="8.9" rx="2"/></clipPath></defs><g clip-path="url(#f30244468)"><rect x="0" y="0" width="4.67" height="9" fill="#000"/><rect x="4.67" y="0" width="4.67" height="9" fill="#fae042"/><rect x="9.33" y="0" width="4.67" height="9" fill="#ed2939"/></g></svg>
<div class="t" style="left:322.40px;top:448.00px;font-size:8.2px;line-height:9px;color:#cc1a30;font-weight:700;">Hidden</div>
<div class="t" style="left:370.50px;width:300px;text-align:center;top:452.00px;font-size:8.2px;line-height:9px;color:#cc1a30;font-weight:700;">Hidden</div>
<svg style="position:absolute;left:650.30px;top:446.20px;border-radius:2px" width="38.5" height="29.3" viewBox="0 0 38.5 29.3"><defs><clipPath id="c65034462"><rect x="0" y="0" width="38.5" height="29.3" rx="2.2"/></clipPath></defs><g clip-path="url(#c65034462)"><rect x="0" y="0" width="38.5" height="29.3" fill="#b8b8b4"/><rect x="0" y="14" width="38.5" height="15.3" fill="#9e9482"/><g transform="translate(2.23 1.76) scale(0.9)"><path d="M3.2 17.6 Q3.6 14.2 7.8 13 L13.4 11.4 L18.2 7 Q19.8 5.8 23 5.8 L30.6 6 Q33.4 6.2 34.5 8.8 L36.4 12.8 Q37.2 14.6 36.9 18.4 L36.4 22.4 Q36 23.8 34.2 23.8 L9 27 Q4.4 27.4 3.6 24.6 Z" fill="#3a4048"/><path d="M14 11.6 L18.8 7.3 L25.6 7.3 L22.8 12.2 Z" fill="#1e2226" opacity="0.9"/><path d="M23.8 12 L26.5 7.4 L31.6 7.6 L34 11.4 Z" fill="#1e2226" opacity="0.7"/><path d="M5 17.4 L11 16.4 L11.5 18 L5.5 19 Z" fill="#e8e8e8" opacity="0.45"/><circle cx="10.6" cy="25.4" r="3.1" fill="#151618"/><circle cx="31" cy="22.6" r="2.9" fill="#151618"/></g></g></svg>
<svg style="position:absolute;left:691.50px;top:446.20px;border-radius:2px" width="38.5" height="29.3" viewBox="0 0 38.5 29.3"><defs><clipPath id="c69154462"><rect x="0" y="0" width="38.5" height="29.3" rx="2.2"/></clipPath></defs><g clip-path="url(#c69154462)"><rect x="0" y="0" width="38.5" height="29.3" fill="#b8b8b4"/><rect x="0" y="14" width="38.5" height="15.3" fill="#9e9482"/><g transform="translate(2.23 1.76) scale(0.9)"><path d="M3.2 17.6 Q3.6 14.2 7.8 13 L13.4 11.4 L18.2 7 Q19.8 5.8 23 5.8 L30.6 6 Q33.4 6.2 34.5 8.8 L36.4 12.8 Q37.2 14.6 36.9 18.4 L36.4 22.4 Q36 23.8 34.2 23.8 L9 27 Q4.4 27.4 3.6 24.6 Z" fill="#262c36"/><path d="M14 11.6 L18.8 7.3 L25.6 7.3 L22.8 12.2 Z" fill="#14181e" opacity="0.9"/><path d="M23.8 12 L26.5 7.4 L31.6 7.6 L34 11.4 Z" fill="#14181e" opacity="0.7"/><path d="M5 17.4 L11 16.4 L11.5 18 L5.5 19 Z" fill="#e8e8e8" opacity="0.45"/><circle cx="10.6" cy="25.4" r="3.1" fill="#151618"/><circle cx="31" cy="22.6" r="2.9" fill="#151618"/></g></g></svg>
<svg style="position:absolute;left:732.70px;top:446.20px;border-radius:2px" width="38.5" height="29.3" viewBox="0 0 38.5 29.3"><defs><clipPath id="c73264462"><rect x="0" y="0" width="38.5" height="29.3" rx="2.2"/></clipPath></defs><g clip-path="url(#c73264462)"><rect x="0" y="0" width="38.5" height="29.3" fill="#b8b8b4"/><rect x="0" y="14" width="38.5" height="15.3" fill="#9e9482"/><g transform="translate(2.23 1.76) scale(0.9)"><path d="M3.2 17.6 Q3.6 14.2 7.8 13 L13.4 11.4 L18.2 7 Q19.8 5.8 23 5.8 L30.6 6 Q33.4 6.2 34.5 8.8 L36.4 12.8 Q37.2 14.6 36.9 18.4 L36.4 22.4 Q36 23.8 34.2 23.8 L9 27 Q4.4 27.4 3.6 24.6 Z" fill="#d4d8dc"/><path d="M14 11.6 L18.8 7.3 L25.6 7.3 L22.8 12.2 Z" fill="#3a3e44" opacity="0.9"/><path d="M23.8 12 L26.5 7.4 L31.6 7.6 L34 11.4 Z" fill="#3a3e44" opacity="0.7"/><path d="M5 17.4 L11 16.4 L11.5 18 L5.5 19 Z" fill="#e8e8e8" opacity="0.45"/><circle cx="10.6" cy="25.4" r="3.1" fill="#151618"/><circle cx="31" cy="22.6" r="2.9" fill="#151618"/></g></g></svg>
<div class="t" style="left:788.00px;top:447.00px;font-size:7.3px;line-height:9px;color:#212529;">without login</div>
<div class="t" style="left:788.00px;top:457.00px;font-size:7.3px;line-height:9px;color:#212529;">EU private</div>
<div class="t" style="left:788.00px;top:467.00px;font-size:7.3px;line-height:9px;color:#212529;">EU company</div>
<div class="t" style="left:788.00px;top:478.00px;font-size:7.3px;line-height:9px;color:#212529;">not EU</div>
<div class="t" style="left:712.70px;width:300px;text-align:center;top:447.00px;font-size:7.3px;line-height:9px;color:#212529;">Today 10:30</div>
<div class="t" style="left:767.00px;width:300px;text-align:center;top:447.00px;font-size:7.3px;line-height:9px;color:#212529;">2025-12-03</div>
<div class="t" style="left:767.00px;width:300px;text-align:center;top:457.00px;font-size:7.3px;line-height:9px;color:#212529;">09:30</div>
<div class="t" style="left:804.80px;width:300px;text-align:center;top:447.00px;font-size:7.3px;line-height:9px;color:#212529;">84</div>
<div class="t" style="left:837.80px;width:300px;text-align:center;top:447.00px;font-size:7.3px;line-height:9px;color:#007bff;">84</div>
<div class="t" style="left:1015.84px;top:447.00px;font-size:7.3px;line-height:9px;color:#212529;">84</div>
<svg style="position:absolute;left:1024.76px;top:446.40px" width="8" height="8" viewBox="0 0 8 8"><circle cx="4" cy="4" r="4" fill="#1f9d3c"/><path d="M1.92 4.08 L3.40 5.52 L6.08 2.72" fill="none" stroke="#fff" stroke-width="1.44" stroke-linecap="round" stroke-linejoin="round"/></svg>
<div class="t" style="left:901.60px;width:300px;text-align:center;top:447.00px;font-size:7.3px;line-height:9px;color:#007bff;">0</div>
<div class="t" style="left:935.60px;width:300px;text-align:center;top:447.00px;font-size:7.3px;line-height:9px;color:#212529;">0</div>
<div class="t" style="left:997.00px;width:300px;text-align:center;top:447.00px;font-size:7.3px;line-height:9px;color:#212529;">Ready</div>
<svg style="position:absolute;left:1171.60px;top:446.40px" width="8" height="8" viewBox="0 0 8 8"><circle cx="4" cy="4" r="4" fill="#1f9d3c"/><path d="M1.92 4.08 L3.40 5.52 L6.08 2.72" fill="none" stroke="#fff" stroke-width="1.44" stroke-linecap="round" stroke-linejoin="round"/></svg>
<div style="position:absolute;left:146.50px;top:489.90px;width:1049.00px;height:46.50px;background:#f9f9f9"></div>
<div style="position:absolute;left:146.50px;top:488.90px;width:1049.00px;height:1.00px;background:#e5e7ea"></div>
<svg style="position:absolute;left:154.80px;top:493.50px" width="9.5" height="8.5" viewBox="0 0 9.5 8.5"><path d="M5.2 1.3 L1.7 1.3 Q0.8 1.3 0.8 2.2 L0.8 6.9 Q0.8 7.7 1.7 7.7 L6.3 7.7 Q7.2 7.7 7.2 6.9 L7.2 4.8" fill="none" stroke="#212529" stroke-width="1.1"/><path d="M3.3 4.5 L7.3 0.5 Q7.6 0.2 7.9 0.5 L8.7 1.3 Q9 1.6 8.7 1.9 L4.7 5.9 L3 6.2 Z" fill="#212529"/></svg>
<svg style="position:absolute;left:168.60px;top:493.60px" width="8.6" height="7" viewBox="0 0 8.6 7"><path d="M0.2 2 Q0.2 1.1 1.1 1.1 L2.3 1.1 L2.9 0.1 L5.5 0.1 L6.1 1.1 L7.3 1.1 Q8.2 1.1 8.2 2 L8.2 5.6 Q8.2 6.4 7.3 6.4 L1.1 6.4 Q0.2 6.4 0.2 5.6 Z" fill="#212529"/><circle cx="4.2" cy="3.7" r="1.6" fill="#fff"/><circle cx="4.2" cy="3.7" r="0.85" fill="#212529"/></svg>
<div class="t" style="left:185.67px;top:494.00px;font-size:7.3px;line-height:9px;color:#212529;">7</div>
<svg style="position:absolute;left:190.53px;top:493.40px" width="8" height="8" viewBox="0 0 8 8"><circle cx="4" cy="4" r="4" fill="#1f9d3c"/><path d="M1.92 4.08 L3.40 5.52 L6.08 2.72" fill="none" stroke="#fff" stroke-width="1.44" stroke-linecap="round" stroke-linejoin="round"/></svg>
<div class="t" style="left:67.00px;width:300px;text-align:center;top:494.00px;font-size:7.3px;line-height:9px;color:#212529;">28856</div>
<div class="t" style="left:95.90px;width:300px;text-align:center;top:495.00px;font-size:8.2px;line-height:9px;color:#cc1a30;font-weight:700;">Hidden</div>
<svg style="position:absolute;left:273.80px;top:494.00px" width="13.5" height="10" viewBox="0 0 13.5 10"><rect x="0.7" y="0.75" width="12" height="8.4" rx="1.7" fill="none" stroke="#56687c" stroke-width="1.35"/><rect x="1" y="0.9" width="11.4" height="1.2" fill="#56687c"/><path d="M1.6 2.7 Q4 3.2 5.4 5.2 L6.7 6.3 L8 5.2 Q9.4 3.2 11.8 2.7" fill="none" stroke="#56687c" stroke-width="1"/><path d="M5 4.4 L8.4 4.4 L6.7 6.6 Z" fill="#56687c"/></svg>
<svg style="position:absolute;left:302.40px;top:493.80px" width="14" height="8.9" viewBox="0 0 14 8.9"><defs><clipPath id="f30244938"><rect x="0" y="0" width="14" height="8.9" rx="2"/></clipPath></defs><g clip-path="url(#f30244938)"><rect x="0" y="0" width="4.67" height="9" fill="#000"/><rect x="4.67" y="0" width="4.67" height="9" fill="#fae042"/><rect x="9.33" y="0" width="4.67" height="9" fill="#ed2939"/></g></svg>
<div class="t" style="left:322.40px;top:495.00px;font-size:8.2px;line-height:9px;color:#cc1a30;font-weight:700;">Hidden</div>
<div class="t" style="left:370.50px;width:300px;text-align:center;top:499.00px;font-size:8.2px;line-height:9px;color:#cc1a30;font-weight:700;">Hidden</div>
<svg style="position:absolute;left:650.30px;top:493.20px;border-radius:2px" width="38.5" height="29.3" viewBox="0 0 38.5 29.3"><defs><clipPath id="c65034932"><rect x="0" y="0" width="38.5" height="29.3" rx="2.2"/></clipPath></defs><g clip-path="url(#c65034932)"><rect x="0" y="0" width="38.5" height="29.3" fill="#c4c4c0"/><rect x="0" y="14" width="38.5" height="15.3" fill="#8e887c"/><g transform="translate(5.69 4.92) scale(0.72)"><path d="M3.2 17.6 Q3.6 14.2 7.8 13 L13.4 11.4 L18.2 7 Q19.8 5.8 23 5.8 L30.6 6 Q33.4 6.2 34.5 8.8 L36.4 12.8 Q37.2 14.6 36.9 18.4 L36.4 22.4 Q36 23.8 34.2 23.8 L9 27 Q4.4 27.4 3.6 24.6 Z" fill="#1c2026"/><path d="M14 11.6 L18.8 7.3 L25.6 7.3 L22.8 12.2 Z" fill="#0e1014" opacity="0.9"/><path d="M23.8 12 L26.5 7.4 L31.6 7.6 L34 11.4 Z" fill="#0e1014" opacity="0.7"/><path d="M5 17.4 L11 16.4 L11.5 18 L5.5 19 Z" fill="#e8e8e8" opacity="0.45"/><circle cx="10.6" cy="25.4" r="3.1" fill="#151618"/><circle cx="31" cy="22.6" r="2.9" fill="#151618"/></g></g></svg>
<svg style="position:absolute;left:691.50px;top:493.20px;border-radius:2px" width="38.5" height="29.3" viewBox="0 0 38.5 29.3"><defs><clipPath id="c69154932"><rect x="0" y="0" width="38.5" height="29.3" rx="2.2"/></clipPath></defs><g clip-path="url(#c69154932)"><rect x="0" y="0" width="38.5" height="29.3" fill="#c4c4c0"/><rect x="0" y="14" width="38.5" height="15.3" fill="#8e887c"/><g transform="translate(5.69 4.92) scale(0.72)"><path d="M3.2 17.6 Q3.6 14.2 7.8 13 L13.4 11.4 L18.2 7 Q19.8 5.8 23 5.8 L30.6 6 Q33.4 6.2 34.5 8.8 L36.4 12.8 Q37.2 14.6 36.9 18.4 L36.4 22.4 Q36 23.8 34.2 23.8 L9 27 Q4.4 27.4 3.6 24.6 Z" fill="#1c2026"/><path d="M14 11.6 L18.8 7.3 L25.6 7.3 L22.8 12.2 Z" fill="#0e1014" opacity="0.9"/><path d="M23.8 12 L26.5 7.4 L31.6 7.6 L34 11.4 Z" fill="#0e1014" opacity="0.7"/><path d="M5 17.4 L11 16.4 L11.5 18 L5.5 19 Z" fill="#e8e8e8" opacity="0.45"/><circle cx="10.6" cy="25.4" r="3.1" fill="#151618"/><circle cx="31" cy="22.6" r="2.9" fill="#151618"/></g></g></svg>
<svg style="position:absolute;left:732.70px;top:493.20px;border-radius:2px" width="38.5" height="29.3" viewBox="0 0 38.5 29.3"><defs><clipPath id="c73264932"><rect x="0" y="0" width="38.5" height="29.3" rx="2.2"/></clipPath></defs><g clip-path="url(#c73264932)"><rect x="0" y="0" width="38.5" height="29.3" fill="#c4c4c0"/><rect x="0" y="14" width="38.5" height="15.3" fill="#8e887c"/><g transform="translate(3.19 2.64) scale(0.85)"><path d="M3.2 17.6 Q3.6 14.2 7.8 13 L13.4 11.4 L18.2 7 Q19.8 5.8 23 5.8 L30.6 6 Q33.4 6.2 34.5 8.8 L36.4 12.8 Q37.2 14.6 36.9 18.4 L36.4 22.4 Q36 23.8 34.2 23.8 L9 27 Q4.4 27.4 3.6 24.6 Z" fill="#222a3a"/><path d="M14 11.6 L18.8 7.3 L25.6 7.3 L22.8 12.2 Z" fill="#101420" opacity="0.9"/><path d="M23.8 12 L26.5 7.4 L31.6 7.6 L34 11.4 Z" fill="#101420" opacity="0.7"/><path d="M5 17.4 L11 16.4 L11.5 18 L5.5 19 Z" fill="#e8e8e8" opacity="0.45"/><circle cx="10.6" cy="25.4" r="3.1" fill="#151618"/><circle cx="31" cy="22.6" r="2.9" fill="#151618"/></g></g></svg>
<div class="t" style="left:788.00px;top:494.00px;font-size:7.3px;line-height:9px;color:#212529;">without login</div>
<div class="t" style="left:788.00px;top:504.00px;font-size:7.3px;line-height:9px;color:#212529;">EU private</div>
<div class="t" style="left:788.00px;top:515.00px;font-size:7.3px;line-height:9px;color:#212529;">EU company</div>
<div class="t" style="left:788.00px;top:525.00px;font-size:7.3px;line-height:9px;color:#212529;">not EU</div>
<div class="t" style="left:712.70px;width:300px;text-align:center;top:494.00px;font-size:7.3px;line-height:9px;color:#212529;">Today 10:15</div>
<div class="t" style="left:767.00px;width:300px;text-align:center;top:494.00px;font-size:7.3px;line-height:9px;color:#212529;">2025-12-03</div>
<div class="t" style="left:767.00px;width:300px;text-align:center;top:504.00px;font-size:7.3px;line-height:9px;color:#212529;">09:30</div>
<div class="t" style="left:804.80px;width:300px;text-align:center;top:494.00px;font-size:7.3px;line-height:9px;color:#212529;">7</div>
<div class="t" style="left:837.80px;width:300px;text-align:center;top:494.00px;font-size:7.3px;line-height:9px;color:#007bff;">7</div>
<div class="t" style="left:1017.87px;top:494.00px;font-size:7.3px;line-height:9px;color:#212529;">7</div>
<svg style="position:absolute;left:1022.73px;top:493.40px" width="8" height="8" viewBox="0 0 8 8"><circle cx="4" cy="4" r="4" fill="#1f9d3c"/><path d="M1.92 4.08 L3.40 5.52 L6.08 2.72" fill="none" stroke="#fff" stroke-width="1.44" stroke-linecap="round" stroke-linejoin="round"/></svg>
<div class="t" style="left:901.60px;width:300px;text-align:center;top:494.00px;font-size:7.3px;line-height:9px;color:#007bff;">0</div>
<div class="t" style="left:935.60px;width:300px;text-align:center;top:494.00px;font-size:7.3px;line-height:9px;color:#212529;">0</div>
<div class="t" style="left:997.00px;width:300px;text-align:center;top:494.00px;font-size:7.3px;line-height:9px;color:#212529;">Ready</div>
<svg style="position:absolute;left:1171.60px;top:493.40px" width="8" height="8" viewBox="0 0 8 8"><circle cx="4" cy="4" r="4" fill="#1f9d3c"/><path d="M1.92 4.08 L3.40 5.52 L6.08 2.72" fill="none" stroke="#fff" stroke-width="1.44" stroke-linecap="round" stroke-linejoin="round"/></svg>
<div style="position:absolute;left:146.50px;top:536.40px;width:1049.00px;height:36.30px;background:#fff"></div>
<div style="position:absolute;left:146.50px;top:535.40px;width:1049.00px;height:1.00px;background:#e5e7ea"></div>
<svg style="position:absolute;left:154.80px;top:540.00px" width="9.5" height="8.5" viewBox="0 0 9.5 8.5"><path d="M5.2 1.3 L1.7 1.3 Q0.8 1.3 0.8 2.2 L0.8 6.9 Q0.8 7.7 1.7 7.7 L6.3 7.7 Q7.2 7.7 7.2 6.9 L7.2 4.8" fill="none" stroke="#212529" stroke-width="1.1"/><path d="M3.3 4.5 L7.3 0.5 Q7.6 0.2 7.9 0.5 L8.7 1.3 Q9 1.6 8.7 1.9 L4.7 5.9 L3 6.2 Z" fill="#212529"/></svg>
<svg style="position:absolute;left:168.60px;top:540.10px" width="8.6" height="7" viewBox="0 0 8.6 7"><path d="M0.2 2 Q0.2 1.1 1.1 1.1 L2.3 1.1 L2.9 0.1 L5.5 0.1 L6.1 1.1 L7.3 1.1 Q8.2 1.1 8.2 2 L8.2 5.6 Q8.2 6.4 7.3 6.4 L1.1 6.4 Q0.2 6.4 0.2 5.6 Z" fill="#212529"/><circle cx="4.2" cy="3.7" r="1.6" fill="#fff"/><circle cx="4.2" cy="3.7" r="0.85" fill="#212529"/></svg>
<div class="t" style="left:185.67px;top:540.00px;font-size:7.3px;line-height:9px;color:#212529;">5</div>
<svg style="position:absolute;left:190.53px;top:539.90px" width="8" height="8" viewBox="0 0 8 8"><circle cx="4" cy="4" r="4" fill="#1f9d3c"/><path d="M1.92 4.08 L3.40 5.52 L6.08 2.72" fill="none" stroke="#fff" stroke-width="1.44" stroke-linecap="round" stroke-linejoin="round"/></svg>
<div class="t" style="left:67.00px;width:300px;text-align:center;top:540.00px;font-size:7.3px;line-height:9px;color:#212529;">28854</div>
<div class="t" style="left:95.90px;width:300px;text-align:center;top:542.00px;font-size:8.2px;line-height:9px;color:#cc1a30;font-weight:700;">Hidden</div>
<svg style="position:absolute;left:275.00px;top:539.90px" width="12" height="11.5" viewBox="0 0 12 11.5"><path d="M5.5 0.5 L11.2 6.1 L7.4 9.5 L1.8 4.1 Z" fill="#66778a" stroke="#3f5168" stroke-width="0.8" stroke-linejoin="round"/><path d="M4.4 7 L1.2 10.3" stroke="#3f5168" stroke-width="1.9" stroke-linecap="round"/></svg>
<svg style="position:absolute;left:302.40px;top:540.30px" width="14" height="8.9" viewBox="0 0 14 8.9"><defs><clipPath id="f30245403"><rect x="0" y="0" width="14" height="8.9" rx="2"/></clipPath></defs><g clip-path="url(#f30245403)"><rect x="0" y="0" width="14" height="3" fill="#000"/><rect x="0" y="3" width="14" height="3" fill="#dd0000"/><rect x="0" y="6" width="14" height="3" fill="#ffce00"/></g></svg>
<div class="t" style="left:322.40px;top:542.00px;font-size:8.2px;line-height:9px;color:#cc1a30;font-weight:700;">Hidden</div>
<div class="t" style="left:370.50px;width:300px;text-align:center;top:545.00px;font-size:8.2px;line-height:9px;color:#cc1a30;font-weight:700;">Hidden</div>
<svg style="position:absolute;left:650.30px;top:539.70px;border-radius:2px" width="38.5" height="29.3" viewBox="0 0 38.5 29.3"><defs><clipPath id="c65035396"><rect x="0" y="0" width="38.5" height="29.3" rx="2.2"/></clipPath></defs><g clip-path="url(#c65035396)"><rect x="0" y="0" width="38.5" height="29.3" fill="#cac8c6"/><rect x="0" y="14" width="38.5" height="15.3" fill="#9a9088"/><g transform="translate(2.23 1.76) scale(0.9)"><path d="M3.2 17.6 Q3.6 14.2 7.8 13 L13.4 11.4 L18.2 7 Q19.8 5.8 23 5.8 L30.6 6 Q33.4 6.2 34.5 8.8 L36.4 12.8 Q37.2 14.6 36.9 18.4 L36.4 22.4 Q36 23.8 34.2 23.8 L9 27 Q4.4 27.4 3.6 24.6 Z" fill="#343c48"/><path d="M14 11.6 L18.8 7.3 L25.6 7.3 L22.8 12.2 Z" fill="#1a1e26" opacity="0.9"/><path d="M23.8 12 L26.5 7.4 L31.6 7.6 L34 11.4 Z" fill="#1a1e26" opacity="0.7"/><path d="M5 17.4 L11 16.4 L11.5 18 L5.5 19 Z" fill="#e8e8e8" opacity="0.45"/><circle cx="10.6" cy="25.4" r="3.1" fill="#151618"/><circle cx="31" cy="22.6" r="2.9" fill="#151618"/></g></g></svg>
<svg style="position:absolute;left:691.50px;top:539.70px;border-radius:2px" width="38.5" height="29.3" viewBox="0 0 38.5 29.3"><defs><clipPath id="c69155396"><rect x="0" y="0" width="38.5" height="29.3" rx="2.2"/></clipPath></defs><g clip-path="url(#c69155396)"><rect x="0" y="0" width="38.5" height="29.3" fill="#d0cfcc"/><rect x="0" y="14" width="38.5" height="15.3" fill="#8a7e72"/><g transform="translate(2.23 1.76) scale(0.9)"><path d="M3.2 17.6 Q3.6 14.2 7.8 13 L13.4 11.4 L18.2 7 Q19.8 5.8 23 5.8 L30.6 6 Q33.4 6.2 34.5 8.8 L36.4 12.8 Q37.2 14.6 36.9 18.4 L36.4 22.4 Q36 23.8 34.2 23.8 L9 27 Q4.4 27.4 3.6 24.6 Z" fill="#c0c4c8"/><path d="M14 11.6 L18.8 7.3 L25.6 7.3 L22.8 12.2 Z" fill="#2a2e34" opacity="0.9"/><path d="M23.8 12 L26.5 7.4 L31.6 7.6 L34 11.4 Z" fill="#2a2e34" opacity="0.7"/><path d="M5 17.4 L11 16.4 L11.5 18 L5.5 19 Z" fill="#e8e8e8" opacity="0.45"/><circle cx="10.6" cy="25.4" r="3.1" fill="#151618"/><circle cx="31" cy="22.6" r="2.9" fill="#151618"/></g></g></svg>
<svg style="position:absolute;left:732.70px;top:539.70px;border-radius:2px" width="38.5" height="29.3" viewBox="0 0 38.5 29.3"><defs><clipPath id="c73265396"><rect x="0" y="0" width="38.5" height="29.3" rx="2.2"/></clipPath></defs><g clip-path="url(#c73265396)"><rect x="0" y="0" width="38.5" height="29.3" fill="#cdccc9"/><rect x="0" y="14" width="38.5" height="15.3" fill="#8e8276"/><g transform="translate(2.23 1.76) scale(0.9)"><path d="M3.2 17.6 Q3.6 14.2 7.8 13 L13.4 11.4 L18.2 7 Q19.8 5.8 23 5.8 L30.6 6 Q33.4 6.2 34.5 8.8 L36.4 12.8 Q37.2 14.6 36.9 18.4 L36.4 22.4 Q36 23.8 34.2 23.8 L9 27 Q4.4 27.4 3.6 24.6 Z" fill="#c4c8cc"/><path d="M14 11.6 L18.8 7.3 L25.6 7.3 L22.8 12.2 Z" fill="#2a2e34" opacity="0.9"/><path d="M23.8 12 L26.5 7.4 L31.6 7.6 L34 11.4 Z" fill="#2a2e34" opacity="0.7"/><path d="M5 17.4 L11 16.4 L11.5 18 L5.5 19 Z" fill="#e8e8e8" opacity="0.45"/><circle cx="10.6" cy="25.4" r="3.1" fill="#151618"/><circle cx="31" cy="22.6" r="2.9" fill="#151618"/></g></g></svg>
<div class="t" style="left:788.00px;top:540.00px;font-size:7.3px;line-height:9px;color:#212529;">EU private</div>
<div class="t" style="left:788.00px;top:551.00px;font-size:7.3px;line-height:9px;color:#212529;">EU company</div>
<div class="t" style="left:788.00px;top:561.00px;font-size:7.3px;line-height:9px;color:#212529;">not EU</div>
<div class="t" style="left:712.70px;width:300px;text-align:center;top:540.00px;font-size:7.3px;line-height:9px;color:#212529;">Today 10:00</div>
<div class="t" style="left:767.00px;width:300px;text-align:center;top:540.00px;font-size:7.3px;line-height:9px;color:#212529;">2025-12-03</div>
<div class="t" style="left:767.00px;width:300px;text-align:center;top:550.00px;font-size:7.3px;line-height:9px;color:#212529;">15:30</div>
<div class="t" style="left:804.80px;width:300px;text-align:center;top:540.00px;font-size:7.3px;line-height:9px;color:#212529;">5</div>
<div class="t" style="left:837.80px;width:300px;text-align:center;top:540.00px;font-size:7.3px;line-height:9px;color:#007bff;">5</div>
<div class="t" style="left:1017.87px;top:540.00px;font-size:7.3px;line-height:9px;color:#212529;">5</div>
<svg style="position:absolute;left:1022.73px;top:539.90px" width="8" height="8" viewBox="0 0 8 8"><circle cx="4" cy="4" r="4" fill="#1f9d3c"/><path d="M1.92 4.08 L3.40 5.52 L6.08 2.72" fill="none" stroke="#fff" stroke-width="1.44" stroke-linecap="round" stroke-linejoin="round"/></svg>
<div class="t" style="left:901.60px;width:300px;text-align:center;top:540.00px;font-size:7.3px;line-height:9px;color:#007bff;">0</div>
<div class="t" style="left:935.60px;width:300px;text-align:center;top:540.00px;font-size:7.3px;line-height:9px;color:#212529;">0</div>
<div class="t" style="left:997.00px;width:300px;text-align:center;top:540.00px;font-size:7.3px;line-height:9px;color:#212529;">Ready</div>
<svg style="position:absolute;left:1171.60px;top:539.90px" width="8" height="8" viewBox="0 0 8 8"><circle cx="4" cy="4" r="4" fill="#1f9d3c"/><path d="M1.92 4.08 L3.40 5.52 L6.08 2.72" fill="none" stroke="#fff" stroke-width="1.44" stroke-linecap="round" stroke-linejoin="round"/></svg>
<div style="position:absolute;left:146.50px;top:572.70px;width:1049.00px;height:46.20px;background:#f9f9f9"></div>
<div style="position:absolute;left:146.50px;top:571.70px;width:1049.00px;height:1.00px;background:#e5e7ea"></div>
<svg style="position:absolute;left:154.80px;top:576.30px" width="9.5" height="8.5" viewBox="0 0 9.5 8.5"><path d="M5.2 1.3 L1.7 1.3 Q0.8 1.3 0.8 2.2 L0.8 6.9 Q0.8 7.7 1.7 7.7 L6.3 7.7 Q7.2 7.7 7.2 6.9 L7.2 4.8" fill="none" stroke="#212529" stroke-width="1.1"/><path d="M3.3 4.5 L7.3 0.5 Q7.6 0.2 7.9 0.5 L8.7 1.3 Q9 1.6 8.7 1.9 L4.7 5.9 L3 6.2 Z" fill="#212529"/></svg>
<svg style="position:absolute;left:168.60px;top:576.40px" width="8.6" height="7" viewBox="0 0 8.6 7"><path d="M0.2 2 Q0.2 1.1 1.1 1.1 L2.3 1.1 L2.9 0.1 L5.5 0.1 L6.1 1.1 L7.3 1.1 Q8.2 1.1 8.2 2 L8.2 5.6 Q8.2 6.4 7.3 6.4 L1.1 6.4 Q0.2 6.4 0.2 5.6 Z" fill="#212529"/><circle cx="4.2" cy="3.7" r="1.6" fill="#fff"/><circle cx="4.2" cy="3.7" r="0.85" fill="#212529"/></svg>
<div class="t" style="left:185.67px;top:576.00px;font-size:7.3px;line-height:9px;color:#212529;">4</div>
<svg style="position:absolute;left:190.53px;top:576.20px" width="8" height="8" viewBox="0 0 8 8"><circle cx="4" cy="4" r="4" fill="#1f9d3c"/><path d="M1.92 4.08 L3.40 5.52 L6.08 2.72" fill="none" stroke="#fff" stroke-width="1.44" stroke-linecap="round" stroke-linejoin="round"/></svg>
<div class="t" style="left:67.00px;width:300px;text-align:center;top:576.00px;font-size:7.3px;line-height:9px;color:#212529;">28853</div>
<div class="t" style="left:95.90px;width:300px;text-align:center;top:578.00px;font-size:8.2px;line-height:9px;color:#cc1a30;font-weight:700;">Hidden</div>
<svg style="position:absolute;left:275.00px;top:576.20px" width="12" height="11.5" viewBox="0 0 12 11.5"><path d="M5.5 0.5 L11.2 6.1 L7.4 9.5 L1.8 4.1 Z" fill="#66778a" stroke="#3f5168" stroke-width="0.8" stroke-linejoin="round"/><path d="M4.4 7 L1.2 10.3" stroke="#3f5168" stroke-width="1.9" stroke-linecap="round"/></svg>
<svg style="position:absolute;left:302.40px;top:576.60px" width="14" height="8.9" viewBox="0 0 14 8.9"><defs><clipPath id="f30245766"><rect x="0" y="0" width="14" height="8.9" rx="2"/></clipPath></defs><g clip-path="url(#f30245766)"><rect x="0" y="0" width="14" height="9" fill="#c8102e"/><rect x="4" y="0" width="1.6" height="9" fill="#fff"/><rect x="0" y="3.7" width="14" height="1.6" fill="#fff"/></g></svg>
<div class="t" style="left:302.70px;top:588.00px;font-size:7.0px;line-height:7px;color:#343a40;">DK</div>
<div class="t" style="left:322.40px;top:578.00px;font-size:8.2px;line-height:9px;color:#cc1a30;font-weight:700;">Hidden</div>
<div class="t" style="left:370.50px;width:300px;text-align:center;top:582.00px;font-size:8.2px;line-height:9px;color:#cc1a30;font-weight:700;">Hidden</div>
<svg style="position:absolute;left:650.30px;top:576.00px;border-radius:2px" width="38.5" height="29.3" viewBox="0 0 38.5 29.3"><defs><clipPath id="c65035760"><rect x="0" y="0" width="38.5" height="29.3" rx="2.2"/></clipPath></defs><g clip-path="url(#c65035760)"><rect x="0" y="0" width="38.5" height="29.3" fill="#9a9a9a"/><rect x="0" y="14" width="38.5" height="15.3" fill="#d4d4d4"/><g transform="translate(2.23 1.76) scale(0.9)"><path d="M3.2 17.6 Q3.6 14.2 7.8 13 L13.4 11.4 L18.2 7 Q19.8 5.8 23 5.8 L30.6 6 Q33.4 6.2 34.5 8.8 L36.4 12.8 Q37.2 14.6 36.9 18.4 L36.4 22.4 Q36 23.8 34.2 23.8 L9 27 Q4.4 27.4 3.6 24.6 Z" fill="#2a3a4a"/><path d="M14 11.6 L18.8 7.3 L25.6 7.3 L22.8 12.2 Z" fill="#161e28" opacity="0.9"/><path d="M23.8 12 L26.5 7.4 L31.6 7.6 L34 11.4 Z" fill="#161e28" opacity="0.7"/><path d="M5 17.4 L11 16.4 L11.5 18 L5.5 19 Z" fill="#e8e8e8" opacity="0.45"/><circle cx="10.6" cy="25.4" r="3.1" fill="#151618"/><circle cx="31" cy="22.6" r="2.9" fill="#151618"/></g></g></svg>
<svg style="position:absolute;left:691.50px;top:576.00px;border-radius:2px" width="38.5" height="29.3" viewBox="0 0 38.5 29.3"><defs><clipPath id="c69155760"><rect x="0" y="0" width="38.5" height="29.3" rx="2.2"/></clipPath></defs><g clip-path="url(#c69155760)"><rect x="0" y="0" width="38.5" height="29.3" fill="#9a9a9a"/><rect x="0" y="14" width="38.5" height="15.3" fill="#d4d4d4"/><g transform="translate(2.23 1.76) scale(0.9)"><path d="M3.2 17.6 Q3.6 14.2 7.8 13 L13.4 11.4 L18.2 7 Q19.8 5.8 23 5.8 L30.6 6 Q33.4 6.2 34.5 8.8 L36.4 12.8 Q37.2 14.6 36.9 18.4 L36.4 22.4 Q36 23.8 34.2 23.8 L9 27 Q4.4 27.4 3.6 24.6 Z" fill="#50555c"/><path d="M14 11.6 L18.8 7.3 L25.6 7.3 L22.8 12.2 Z" fill="#25282c" opacity="0.9"/><path d="M23.8 12 L26.5 7.4 L31.6 7.6 L34 11.4 Z" fill="#25282c" opacity="0.7"/><path d="M5 17.4 L11 16.4 L11.5 18 L5.5 19 Z" fill="#e8e8e8" opacity="0.45"/><circle cx="10.6" cy="25.4" r="3.1" fill="#151618"/><circle cx="31" cy="22.6" r="2.9" fill="#151618"/></g></g></svg>
<svg style="position:absolute;left:732.70px;top:576.00px;border-radius:2px" width="38.5" height="29.3" viewBox="0 0 38.5 29.3"><defs><clipPath id="c73265760"><rect x="0" y="0" width="38.5" height="29.3" rx="2.2"/></clipPath></defs><g clip-path="url(#c73265760)"><rect x="0" y="0" width="38.5" height="29.3" fill="#9a9a9a"/><rect x="0" y="14" width="38.5" height="15.3" fill="#d4d4d4"/><g transform="translate(2.23 1.76) scale(0.9)"><path d="M3.2 17.6 Q3.6 14.2 7.8 13 L13.4 11.4 L18.2 7 Q19.8 5.8 23 5.8 L30.6 6 Q33.4 6.2 34.5 8.8 L36.4 12.8 Q37.2 14.6 36.9 18.4 L36.4 22.4 Q36 23.8 34.2 23.8 L9 27 Q4.4 27.4 3.6 24.6 Z" fill="#44484f"/><path d="M14 11.6 L18.8 7.3 L25.6 7.3 L22.8 12.2 Z" fill="#202226" opacity="0.9"/><path d="M23.8 12 L26.5 7.4 L31.6 7.6 L34 11.4 Z" fill="#202226" opacity="0.7"/><path d="M5 17.4 L11 16.4 L11.5 18 L5.5 19 Z" fill="#e8e8e8" opacity="0.45"/><circle cx="10.6" cy="25.4" r="3.1" fill="#151618"/><circle cx="31" cy="22.6" r="2.9" fill="#151618"/></g></g></svg>
<div class="t" style="left:788.00px;top:576.00px;font-size:7.3px;line-height:9px;color:#212529;">without login</div>
<div class="t" style="left:788.00px;top:587.00px;font-size:7.3px;line-height:9px;color:#212529;">EU private</div>
<div class="t" style="left:788.00px;top:597.00px;font-size:7.3px;line-height:9px;color:#212529;">EU company</div>
<div class="t" style="left:788.00px;top:608.00px;font-size:7.3px;line-height:9px;color:#212529;">not EU</div>
<div class="t" style="left:712.70px;width:300px;text-align:center;top:576.00px;font-size:7.3px;line-height:9px;color:#212529;">Today 09:40</div>
<div class="t" style="left:767.00px;width:300px;text-align:center;top:576.00px;font-size:7.3px;line-height:9px;color:#212529;">2025-12-08</div>
<div class="t" style="left:767.00px;width:300px;text-align:center;top:587.00px;font-size:7.3px;line-height:9px;color:#212529;">11:30</div>
<div class="t" style="left:804.80px;width:300px;text-align:center;top:576.00px;font-size:7.3px;line-height:9px;color:#212529;">1</div>
<div class="t" style="left:837.80px;width:300px;text-align:center;top:576.00px;font-size:7.3px;line-height:9px;color:#007bff;">4</div>
<div class="t" style="left:1017.87px;top:576.00px;font-size:7.3px;line-height:9px;color:#212529;">4</div>
<svg style="position:absolute;left:1022.73px;top:576.20px" width="8" height="8" viewBox="0 0 8 8"><circle cx="4" cy="4" r="4" fill="#1f9d3c"/><path d="M1.92 4.08 L3.40 5.52 L6.08 2.72" fill="none" stroke="#fff" stroke-width="1.44" stroke-linecap="round" stroke-linejoin="round"/></svg>
<div class="t" style="left:901.60px;width:300px;text-align:center;top:576.00px;font-size:7.3px;line-height:9px;color:#007bff;">0</div>
<div class="t" style="left:935.60px;width:300px;text-align:center;top:576.00px;font-size:7.3px;line-height:9px;color:#212529;">0</div>
<div class="t" style="left:997.00px;width:300px;text-align:center;top:576.00px;font-size:7.3px;line-height:9px;color:#212529;">Ready</div>
<svg style="position:absolute;left:1171.60px;top:576.20px" width="8" height="8" viewBox="0 0 8 8"><circle cx="4" cy="4" r="4" fill="#1f9d3c"/><path d="M1.92 4.08 L3.40 5.52 L6.08 2.72" fill="none" stroke="#fff" stroke-width="1.44" stroke-linecap="round" stroke-linejoin="round"/></svg>
<div style="position:absolute;left:146.50px;top:618.90px;width:1049.00px;height:36.90px;background:#fff"></div>
<div style="position:absolute;left:146.50px;top:617.90px;width:1049.00px;height:1.00px;background:#e5e7ea"></div>
<svg style="position:absolute;left:154.80px;top:622.50px" width="9.5" height="8.5" viewBox="0 0 9.5 8.5"><path d="M5.2 1.3 L1.7 1.3 Q0.8 1.3 0.8 2.2 L0.8 6.9 Q0.8 7.7 1.7 7.7 L6.3 7.7 Q7.2 7.7 7.2 6.9 L7.2 4.8" fill="none" stroke="#212529" stroke-width="1.1"/><path d="M3.3 4.5 L7.3 0.5 Q7.6 0.2 7.9 0.5 L8.7 1.3 Q9 1.6 8.7 1.9 L4.7 5.9 L3 6.2 Z" fill="#212529"/></svg>
<svg style="position:absolute;left:168.60px;top:622.60px" width="8.6" height="7" viewBox="0 0 8.6 7"><path d="M0.2 2 Q0.2 1.1 1.1 1.1 L2.3 1.1 L2.9 0.1 L5.5 0.1 L6.1 1.1 L7.3 1.1 Q8.2 1.1 8.2 2 L8.2 5.6 Q8.2 6.4 7.3 6.4 L1.1 6.4 Q0.2 6.4 0.2 5.6 Z" fill="#212529"/><circle cx="4.2" cy="3.7" r="1.6" fill="#fff"/><circle cx="4.2" cy="3.7" r="0.85" fill="#212529"/></svg>
<div class="t" style="left:183.64px;top:623.00px;font-size:7.3px;line-height:9px;color:#212529;">33</div>
<svg style="position:absolute;left:192.56px;top:622.40px" width="8" height="8" viewBox="0 0 8 8"><circle cx="4" cy="4" r="4" fill="#1f9d3c"/><path d="M1.92 4.08 L3.40 5.52 L6.08 2.72" fill="none" stroke="#fff" stroke-width="1.44" stroke-linecap="round" stroke-linejoin="round"/></svg>
<div class="t" style="left:67.00px;width:300px;text-align:center;top:623.00px;font-size:7.3px;line-height:9px;color:#212529;">28852</div>
<div class="t" style="left:95.90px;width:300px;text-align:center;top:624.00px;font-size:8.2px;line-height:9px;color:#cc1a30;font-weight:700;">Hidden</div>
<svg style="position:absolute;left:266.40px;top:623.00px" width="13.5" height="10" viewBox="0 0 13.5 10"><rect x="0.7" y="0.75" width="12" height="8.4" rx="1.7" fill="none" stroke="#56687c" stroke-width="1.35"/><rect x="1" y="0.9" width="11.4" height="1.2" fill="#56687c"/><path d="M1.6 2.7 Q4 3.2 5.4 5.2 L6.7 6.3 L8 5.2 Q9.4 3.2 11.8 2.7" fill="none" stroke="#56687c" stroke-width="1"/><path d="M5 4.4 L8.4 4.4 L6.7 6.6 Z" fill="#56687c"/></svg>
<svg style="position:absolute;left:283.20px;top:622.70px" width="10.5" height="11" viewBox="0 0 10.5 11"><path d="M9.2 1.9 A4.75 4.75 0 1 0 9.2 9.1" fill="none" stroke="#56687c" stroke-width="1.3" stroke-linecap="round"/><path d="M0.3 4.5 L5.8 4.5 M0.3 6.5 L5.8 6.5" stroke="#56687c" stroke-width="0.9"/></svg>
<svg style="position:absolute;left:302.40px;top:622.80px" width="14" height="8.9" viewBox="0 0 14 8.9"><defs><clipPath id="f30246228"><rect x="0" y="0" width="14" height="8.9" rx="2"/></clipPath></defs><g clip-path="url(#f30246228)"><rect x="0" y="0" width="14" height="3" fill="#000"/><rect x="0" y="3" width="14" height="3" fill="#dd0000"/><rect x="0" y="6" width="14" height="3" fill="#ffce00"/></g></svg>
<div class="t" style="left:322.40px;top:624.00px;font-size:8.2px;line-height:9px;color:#cc1a30;font-weight:700;">Hidden</div>
<div class="t" style="left:370.50px;width:300px;text-align:center;top:628.00px;font-size:8.2px;line-height:9px;color:#cc1a30;font-weight:700;">Hidden</div>
<svg style="position:absolute;left:650.30px;top:622.20px;border-radius:2px" width="38.5" height="29.3" viewBox="0 0 38.5 29.3"><defs><clipPath id="c65036221"><rect x="0" y="0" width="38.5" height="29.3" rx="2.2"/></clipPath></defs><g clip-path="url(#c65036221)"><rect x="0" y="0" width="38.5" height="29.3" fill="#d8dad6"/><rect x="0" y="14" width="38.5" height="15.3" fill="#b2a690"/><g transform="translate(2.23 1.76) scale(0.9)"><path d="M3.2 17.6 Q3.6 14.2 7.8 13 L13.4 11.4 L18.2 7 Q19.8 5.8 23 5.8 L30.6 6 Q33.4 6.2 34.5 8.8 L36.4 12.8 Q37.2 14.6 36.9 18.4 L36.4 22.4 Q36 23.8 34.2 23.8 L9 27 Q4.4 27.4 3.6 24.6 Z" fill="#1a1a1e"/><path d="M14 11.6 L18.8 7.3 L25.6 7.3 L22.8 12.2 Z" fill="#0c0c10" opacity="0.9"/><path d="M23.8 12 L26.5 7.4 L31.6 7.6 L34 11.4 Z" fill="#0c0c10" opacity="0.7"/><path d="M5 17.4 L11 16.4 L11.5 18 L5.5 19 Z" fill="#e8e8e8" opacity="0.45"/><circle cx="10.6" cy="25.4" r="3.1" fill="#151618"/><circle cx="31" cy="22.6" r="2.9" fill="#151618"/></g></g></svg>
<svg style="position:absolute;left:691.50px;top:622.20px;border-radius:2px" width="38.5" height="29.3" viewBox="0 0 38.5 29.3"><defs><clipPath id="c69156221"><rect x="0" y="0" width="38.5" height="29.3" rx="2.2"/></clipPath></defs><g clip-path="url(#c69156221)"><rect x="0" y="0" width="38.5" height="29.3" fill="#cfd0ce"/><rect x="0" y="14" width="38.5" height="15.3" fill="#8e8c86"/><g transform="translate(2.23 1.76) scale(0.9)"><path d="M3.2 17.6 Q3.6 14.2 7.8 13 L13.4 11.4 L18.2 7 Q19.8 5.8 23 5.8 L30.6 6 Q33.4 6.2 34.5 8.8 L36.4 12.8 Q37.2 14.6 36.9 18.4 L36.4 22.4 Q36 23.8 34.2 23.8 L9 27 Q4.4 27.4 3.6 24.6 Z" fill="#1c1c20"/><path d="M14 11.6 L18.8 7.3 L25.6 7.3 L22.8 12.2 Z" fill="#0c0c10" opacity="0.9"/><path d="M23.8 12 L26.5 7.4 L31.6 7.6 L34 11.4 Z" fill="#0c0c10" opacity="0.7"/><path d="M5 17.4 L11 16.4 L11.5 18 L5.5 19 Z" fill="#e8e8e8" opacity="0.45"/><circle cx="10.6" cy="25.4" r="3.1" fill="#151618"/><circle cx="31" cy="22.6" r="2.9" fill="#151618"/></g></g></svg>
<svg style="position:absolute;left:732.70px;top:622.20px;border-radius:2px" width="38.5" height="29.3" viewBox="0 0 38.5 29.3"><defs><clipPath id="c73266221"><rect x="0" y="0" width="38.5" height="29.3" rx="2.2"/></clipPath></defs><g clip-path="url(#c73266221)"><rect x="0" y="0" width="38.5" height="29.3" fill="#c6c4c0"/><rect x="0" y="14" width="38.5" height="15.3" fill="#8e8a82"/><g transform="translate(2.23 1.76) scale(0.9)"><path d="M3.2 17.6 Q3.6 14.2 7.8 13 L13.4 11.4 L18.2 7 Q19.8 5.8 23 5.8 L30.6 6 Q33.4 6.2 34.5 8.8 L36.4 12.8 Q37.2 14.6 36.9 18.4 L36.4 22.4 Q36 23.8 34.2 23.8 L9 27 Q4.4 27.4 3.6 24.6 Z" fill="#1e1e22"/><path d="M14 11.6 L18.8 7.3 L25.6 7.3 L22.8 12.2 Z" fill="#0c0c10" opacity="0.9"/><path d="M23.8 12 L26.5 7.4 L31.6 7.6 L34 11.4 Z" fill="#0c0c10" opacity="0.7"/><path d="M5 17.4 L11 16.4 L11.5 18 L5.5 19 Z" fill="#e8e8e8" opacity="0.45"/><circle cx="10.6" cy="25.4" r="3.1" fill="#151618"/><circle cx="31" cy="22.6" r="2.9" fill="#151618"/></g></g></svg>
<div class="t" style="left:788.00px;top:623.00px;font-size:7.3px;line-height:9px;color:#212529;">EU private</div>
<div class="t" style="left:788.00px;top:633.00px;font-size:7.3px;line-height:9px;color:#212529;">EU company</div>
<div class="t" style="left:712.70px;width:300px;text-align:center;top:623.00px;font-size:7.3px;line-height:9px;color:#212529;">Today 09:00</div>
<div class="t" style="left:767.00px;width:300px;text-align:center;top:623.00px;font-size:7.3px;line-height:9px;color:#212529;">2025-12-03</div>
<div class="t" style="left:767.00px;width:300px;text-align:center;top:633.00px;font-size:7.3px;line-height:9px;color:#212529;">13:00</div>
<div class="t" style="left:804.80px;width:300px;text-align:center;top:623.00px;font-size:7.3px;line-height:9px;color:#212529;">35</div>
<div class="t" style="left:837.80px;width:300px;text-align:center;top:623.00px;font-size:7.3px;line-height:9px;color:#007bff;">35</div>
<div class="t" style="left:874.30px;width:300px;text-align:center;top:623.00px;font-size:7.3px;line-height:9px;color:#212529;">33</div>
<div class="t" style="left:901.60px;width:300px;text-align:center;top:623.00px;font-size:7.3px;line-height:9px;color:#007bff;">0</div>
<div class="t" style="left:935.60px;width:300px;text-align:center;top:623.00px;font-size:7.3px;line-height:9px;color:#212529;">0</div>
<div class="t" style="left:997.00px;width:300px;text-align:center;top:623.00px;font-size:7.3px;line-height:9px;color:#212529;">Ready</div>
<svg style="position:absolute;left:1171.60px;top:622.40px" width="8" height="8" viewBox="0 0 8 8"><circle cx="4" cy="4" r="4" fill="#1f9d3c"/><path d="M1.92 4.08 L3.40 5.52 L6.08 2.72" fill="none" stroke="#fff" stroke-width="1.44" stroke-linecap="round" stroke-linejoin="round"/></svg>
<div style="position:absolute;left:146.50px;top:655.80px;width:1049.00px;height:46.70px;background:#f9f9f9"></div>
<div style="position:absolute;left:146.50px;top:654.80px;width:1049.00px;height:1.00px;background:#e5e7ea"></div>
<svg style="position:absolute;left:154.80px;top:659.40px" width="9.5" height="8.5" viewBox="0 0 9.5 8.5"><path d="M5.2 1.3 L1.7 1.3 Q0.8 1.3 0.8 2.2 L0.8 6.9 Q0.8 7.7 1.7 7.7 L6.3 7.7 Q7.2 7.7 7.2 6.9 L7.2 4.8" fill="none" stroke="#212529" stroke-width="1.1"/><path d="M3.3 4.5 L7.3 0.5 Q7.6 0.2 7.9 0.5 L8.7 1.3 Q9 1.6 8.7 1.9 L4.7 5.9 L3 6.2 Z" fill="#212529"/></svg>
<svg style="position:absolute;left:168.60px;top:659.50px" width="8.6" height="7" viewBox="0 0 8.6 7"><path d="M0.2 2 Q0.2 1.1 1.1 1.1 L2.3 1.1 L2.9 0.1 L5.5 0.1 L6.1 1.1 L7.3 1.1 Q8.2 1.1 8.2 2 L8.2 5.6 Q8.2 6.4 7.3 6.4 L1.1 6.4 Q0.2 6.4 0.2 5.6 Z" fill="#212529"/><circle cx="4.2" cy="3.7" r="1.6" fill="#fff"/><circle cx="4.2" cy="3.7" r="0.85" fill="#212529"/></svg>
<div class="t" style="left:185.67px;top:660.00px;font-size:7.3px;line-height:9px;color:#212529;">9</div>
<svg style="position:absolute;left:190.53px;top:659.30px" width="8" height="8" viewBox="0 0 8 8"><circle cx="4" cy="4" r="4" fill="#1f9d3c"/><path d="M1.92 4.08 L3.40 5.52 L6.08 2.72" fill="none" stroke="#fff" stroke-width="1.44" stroke-linecap="round" stroke-linejoin="round"/></svg>
<div class="t" style="left:67.00px;width:300px;text-align:center;top:660.00px;font-size:7.3px;line-height:9px;color:#212529;">28851</div>
<div class="t" style="left:95.90px;width:300px;text-align:center;top:661.00px;font-size:8.2px;line-height:9px;color:#cc1a30;font-weight:700;">Hidden</div>
<svg style="position:absolute;left:275.00px;top:659.30px" width="12" height="11.5" viewBox="0 0 12 11.5"><path d="M5.5 0.5 L11.2 6.1 L7.4 9.5 L1.8 4.1 Z" fill="#66778a" stroke="#3f5168" stroke-width="0.8" stroke-linejoin="round"/><path d="M4.4 7 L1.2 10.3" stroke="#3f5168" stroke-width="1.9" stroke-linecap="round"/></svg>
<svg style="position:absolute;left:302.40px;top:659.70px" width="14" height="8.9" viewBox="0 0 14 8.9"><defs><clipPath id="f30246596"><rect x="0" y="0" width="14" height="8.9" rx="2"/></clipPath></defs><g clip-path="url(#f30246596)"><rect x="0" y="0" width="14" height="3" fill="#000"/><rect x="0" y="3" width="14" height="3" fill="#dd0000"/><rect x="0" y="6" width="14" height="3" fill="#ffce00"/></g></svg>
<div class="t" style="left:322.40px;top:661.00px;font-size:8.2px;line-height:9px;color:#cc1a30;font-weight:700;">Hidden</div>
<div class="t" style="left:370.50px;width:300px;text-align:center;top:665.00px;font-size:8.2px;line-height:9px;color:#cc1a30;font-weight:700;">Hidden</div>
<svg style="position:absolute;left:650.30px;top:659.10px;border-radius:2px" width="38.5" height="29.3" viewBox="0 0 38.5 29.3"><defs><clipPath id="c65036590"><rect x="0" y="0" width="38.5" height="29.3" rx="2.2"/></clipPath></defs><g clip-path="url(#c65036590)"><rect x="0" y="0" width="38.5" height="29.3" fill="#8a8070"/><rect x="0" y="14" width="38.5" height="15.3" fill="#a09888"/><g transform="translate(2.23 1.76) scale(0.9)"><path d="M3.2 17.6 Q3.6 14.2 7.8 13 L13.4 11.4 L18.2 7 Q19.8 5.8 23 5.8 L30.6 6 Q33.4 6.2 34.5 8.8 L36.4 12.8 Q37.2 14.6 36.9 18.4 L36.4 22.4 Q36 23.8 34.2 23.8 L9 27 Q4.4 27.4 3.6 24.6 Z" fill="#2a2c30"/><path d="M14 11.6 L18.8 7.3 L25.6 7.3 L22.8 12.2 Z" fill="#14161a" opacity="0.9"/><path d="M23.8 12 L26.5 7.4 L31.6 7.6 L34 11.4 Z" fill="#14161a" opacity="0.7"/><path d="M5 17.4 L11 16.4 L11.5 18 L5.5 19 Z" fill="#e8e8e8" opacity="0.45"/><circle cx="10.6" cy="25.4" r="3.1" fill="#151618"/><circle cx="31" cy="22.6" r="2.9" fill="#151618"/></g></g></svg>
<svg style="position:absolute;left:691.50px;top:659.10px;border-radius:2px" width="38.5" height="29.3" viewBox="0 0 38.5 29.3"><defs><clipPath id="c69156590"><rect x="0" y="0" width="38.5" height="29.3" rx="2.2"/></clipPath></defs><g clip-path="url(#c69156590)"><rect x="0" y="0" width="38.5" height="29.3" fill="#8a8070"/><rect x="0" y="14" width="38.5" height="15.3" fill="#a09888"/><g transform="translate(2.23 1.76) scale(0.9)"><path d="M3.2 17.6 Q3.6 14.2 7.8 13 L13.4 11.4 L18.2 7 Q19.8 5.8 23 5.8 L30.6 6 Q33.4 6.2 34.5 8.8 L36.4 12.8 Q37.2 14.6 36.9 18.4 L36.4 22.4 Q36 23.8 34.2 23.8 L9 27 Q4.4 27.4 3.6 24.6 Z" fill="#2a2c30"/><path d="M14 11.6 L18.8 7.3 L25.6 7.3 L22.8 12.2 Z" fill="#14161a" opacity="0.9"/><path d="M23.8 12 L26.5 7.4 L31.6 7.6 L34 11.4 Z" fill="#14161a" opacity="0.7"/><path d="M5 17.4 L11 16.4 L11.5 18 L5.5 19 Z" fill="#e8e8e8" opacity="0.45"/><circle cx="10.6" cy="25.4" r="3.1" fill="#151618"/><circle cx="31" cy="22.6" r="2.9" fill="#151618"/></g></g></svg>
<svg style="position:absolute;left:732.70px;top:659.10px;border-radius:2px" width="38.5" height="29.3" viewBox="0 0 38.5 29.3"><defs><clipPath id="c73266590"><rect x="0" y="0" width="38.5" height="29.3" rx="2.2"/></clipPath></defs><g clip-path="url(#c73266590)"><rect x="0" y="0" width="38.5" height="29.3" fill="#8a8070"/><rect x="0" y="14" width="38.5" height="15.3" fill="#a09888"/><g transform="translate(2.23 1.76) scale(0.9)"><path d="M3.2 17.6 Q3.6 14.2 7.8 13 L13.4 11.4 L18.2 7 Q19.8 5.8 23 5.8 L30.6 6 Q33.4 6.2 34.5 8.8 L36.4 12.8 Q37.2 14.6 36.9 18.4 L36.4 22.4 Q36 23.8 34.2 23.8 L9 27 Q4.4 27.4 3.6 24.6 Z" fill="#2a2c30"/><path d="M14 11.6 L18.8 7.3 L25.6 7.3 L22.8 12.2 Z" fill="#14161a" opacity="0.9"/><path d="M23.8 12 L26.5 7.4 L31.6 7.6 L34 11.4 Z" fill="#14161a" opacity="0.7"/><path d="M5 17.4 L11 16.4 L11.5 18 L5.5 19 Z" fill="#e8e8e8" opacity="0.45"/><circle cx="10.6" cy="25.4" r="3.1" fill="#151618"/><circle cx="31" cy="22.6" r="2.9" fill="#151618"/></g></g></svg>
<div class="t" style="left:788.00px;top:660.00px;font-size:7.3px;line-height:9px;color:#212529;">without login</div>
<div class="t" style="left:788.00px;top:670.00px;font-size:7.3px;line-height:9px;color:#212529;">EU private</div>
<div class="t" style="left:788.00px;top:680.00px;font-size:7.3px;line-height:9px;color:#212529;">EU company</div>
<div class="t" style="left:788.00px;top:691.00px;font-size:7.3px;line-height:9px;color:#212529;">not EU</div>
<div class="t" style="left:712.70px;width:300px;text-align:center;top:660.00px;font-size:7.3px;line-height:9px;color:#212529;">Today 08:30</div>
<div class="t" style="left:767.00px;width:300px;text-align:center;top:660.00px;font-size:7.3px;line-height:9px;color:#212529;">2025-12-03</div>
<div class="t" style="left:767.00px;width:300px;text-align:center;top:670.00px;font-size:7.3px;line-height:9px;color:#212529;">09:00</div>
<div class="t" style="left:804.80px;width:300px;text-align:center;top:660.00px;font-size:7.3px;line-height:9px;color:#212529;">9</div>
<div class="t" style="left:837.80px;width:300px;text-align:center;top:660.00px;font-size:7.3px;line-height:9px;color:#007bff;">9</div>
<div class="t" style="left:1017.87px;top:660.00px;font-size:7.3px;line-height:9px;color:#212529;">9</div>
<svg style="position:absolute;left:1022.73px;top:659.30px" width="8" height="8" viewBox="0 0 8 8"><circle cx="4" cy="4" r="4" fill="#1f9d3c"/><path d="M1.92 4.08 L3.40 5.52 L6.08 2.72" fill="none" stroke="#fff" stroke-width="1.44" stroke-linecap="round" stroke-linejoin="round"/></svg>
<div class="t" style="left:901.60px;width:300px;text-align:center;top:660.00px;font-size:7.3px;line-height:9px;color:#007bff;">0</div>
<div class="t" style="left:935.60px;width:300px;text-align:center;top:660.00px;font-size:7.3px;line-height:9px;color:#212529;">0</div>
<div class="t" style="left:997.00px;width:300px;text-align:center;top:660.00px;font-size:7.3px;line-height:9px;color:#212529;">Ready</div>
<svg style="position:absolute;left:1171.60px;top:659.30px" width="8" height="8" viewBox="0 0 8 8"><circle cx="4" cy="4" r="4" fill="#1f9d3c"/><path d="M1.92 4.08 L3.40 5.52 L6.08 2.72" fill="none" stroke="#fff" stroke-width="1.44" stroke-linecap="round" stroke-linejoin="round"/></svg>
</body></html>
